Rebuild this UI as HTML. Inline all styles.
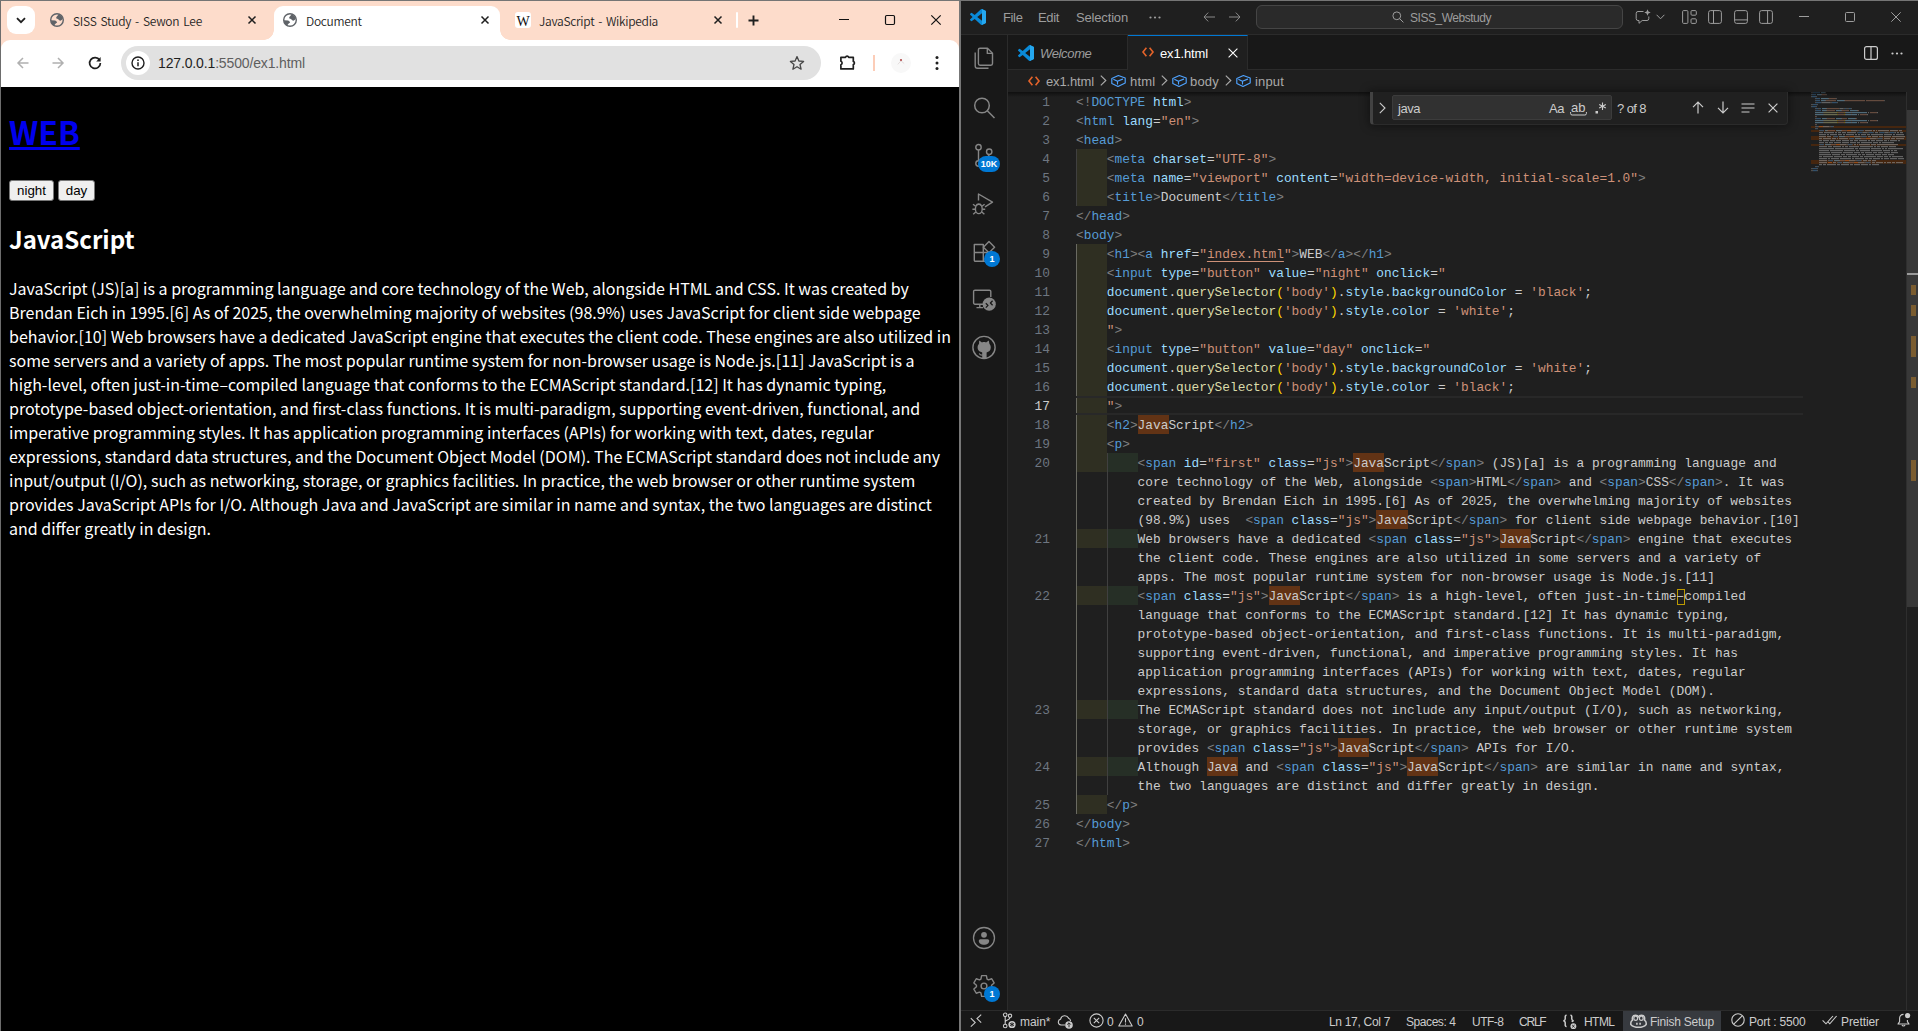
<!DOCTYPE html>
<html lang="en">
<head>
<meta charset="UTF-8">
<title>Document</title>
<style>
*{box-sizing:border-box;margin:0;padding:0}
html,body{width:1918px;height:1031px;overflow:hidden;background:#1f1f1f}
body{position:relative;font-family:"Liberation Sans",sans-serif}
.abs{position:absolute}
svg{display:block;overflow:visible}
/* ---------- Chrome window ---------- */
#chrome{position:absolute;left:0;top:0;width:959px;height:1031px;background:#fddccb;overflow:hidden}
#chrome .bl{position:absolute;left:0;top:0;width:1px;height:1031px;background:#6d6d6d;z-index:9}
#topline{position:absolute;left:0;top:0;width:1918px;height:1px;background:#757575;z-index:20}
#split{position:absolute;left:959px;top:0;width:2px;height:1031px;background:#777;z-index:19}
.ctab{position:absolute;top:11px;height:20px;font-family:"Noto Sans CJK KR","Liberation Sans",sans-serif;font-size:12px;line-height:20px;color:#1f1f1f;white-space:nowrap;font-weight:350;word-spacing:1.5px}
#tsearch{position:absolute;left:7px;top:6px;width:28px;height:28px;border-radius:9px;background:#fff}
#acttab{position:absolute;left:274px;top:6px;width:226px;height:34px;background:#fff;border-radius:9px 9px 0 0}
#acttab:before,#acttab:after{content:"";position:absolute;bottom:0;width:10px;height:10px;background:radial-gradient(circle at 0 0,rgba(255,255,255,0) 9.5px,#fff 10px)}
#acttab:before{left:-10px}
#acttab:after{right:-10px;background:radial-gradient(circle at 100% 0,rgba(255,255,255,0) 9.5px,#fff 10px)}
#toolbar{position:absolute;left:1px;top:40px;width:958px;height:47px;background:#fff;border-radius:9px 9px 0 0}
#omni{position:absolute;left:121px;top:46px;width:700px;height:34px;border-radius:17px;background:#e1e1e1}
#omni .info{position:absolute;left:5px;top:5px;width:24px;height:24px;border-radius:12px;background:#fff}
#url{position:absolute;left:158px;top:53px;font-size:14px;line-height:20px;color:#1f1f1f;white-space:nowrap;font-family:"Liberation Sans",sans-serif}
#url span{color:#5e5e5e}
#page{position:absolute;left:1px;top:87px;width:958px;height:944px;background:#000;color:#fff;font-family:"Noto Sans CJK KR","Liberation Sans",sans-serif}
#page h1{position:absolute;left:8px;top:21px;font-size:32px;line-height:46px;font-weight:bold;color:#0000ee;text-decoration:underline;white-space:nowrap}
#page .btn{position:absolute;top:93px;height:21px;background:#efefef;border:1px solid #767676;border-radius:3px;color:#000;font-family:"Liberation Sans",sans-serif;font-size:13.33px;line-height:18px;padding-top:1px;text-align:center}
#page h2{position:absolute;left:8px;top:134px;font-size:24px;line-height:35px;font-weight:bold;white-space:nowrap}
#page p{position:absolute;left:8px;top:189px;font-size:16px;line-height:24px;white-space:nowrap}
/* ---------- VS Code ---------- */
#vs{position:absolute;left:0;top:0;width:1918px;height:1031px;color:#ccc;font-size:13px;font-family:"Liberation Sans",sans-serif}
#vs .bg{position:absolute;left:961px;top:1px;width:957px;height:1030px;background:#1f1f1f}
#vs .t{position:absolute;white-space:nowrap;line-height:16px;font-size:13px;color:#ccc}
#titlebar{position:absolute;left:961px;top:1px;width:957px;height:34px;background:#1f1f1f;border-bottom:1px solid #2b2b2b}
#actbar{position:absolute;left:961px;top:35px;width:47px;height:975px;background:#181818;border-right:1px solid #2b2b2b}
#tabsbar{position:absolute;left:1008px;top:35px;width:910px;height:35px;background:#181818;border-bottom:1px solid #2b2b2b}
#tab1{position:absolute;left:1008px;top:35px;width:120px;height:35px;background:#181818;border-right:1px solid #2b2b2b;border-bottom:1px solid #2b2b2b}
#tab2{position:absolute;left:1128px;top:35px;width:120px;height:35px;background:#1f1f1f;border-right:1px solid #2b2b2b;border-top:1px solid #0078d4}
#cmdc{position:absolute;left:1256px;top:5px;width:367px;height:24px;border-radius:6px;background:#2a2a2a;border:1px solid #454545}
#statusbar{position:absolute;left:961px;top:1010px;width:957px;height:21px;background:#181818;border-top:1px solid #2b2b2b}
#vs .sb{font-size:12px}
#fin{position:absolute;left:1623px;top:1011px;width:98px;height:20px;background:#373a3f}
.badge{position:absolute;background:#0078d4;color:#fff;font-size:9px;font-weight:bold;text-align:center;border-radius:8px;height:16px;line-height:16px}
/* editor */
.cl{position:absolute;height:19px;line-height:19px;font-family:"Liberation Mono",monospace;font-size:12.83px;white-space:pre;color:#ccc}
.ln{position:absolute;left:1008px;width:42px;height:19px;line-height:19px;text-align:right;font-family:"Liberation Mono",monospace;font-size:12.83px;color:#6e7681}
.lnc{color:#ccc}
.fh{position:absolute;height:19px;background:#623315}
.lk{text-decoration:underline;text-decoration-thickness:1px;text-underline-offset:3px}
.ub{position:absolute;width:8px;height:16px;margin-top:3px;border:1px solid #bd9b03}
.ib1{position:absolute;left:1076px;width:31px;height:19px;background:#2f2f22}
.ib2{position:absolute;left:1107px;width:31px;height:19px;background:#262f26}
.ig{position:absolute;width:1px;background:#404040}
.curline{position:absolute;left:1076px;width:727px;height:19px;border-top:2px solid #282828;border-bottom:2px solid #282828}
#minimap .mr{position:absolute;height:2px;opacity:.62;border-bottom:1px solid rgba(31,31,31,.8)}
#minimap .mh{position:absolute;left:1811px;width:95px;height:2px;background:#45260f}
#find{position:absolute;left:1370px;top:92px;width:418px;height:33px;background:#202020;border:1px solid #2b2b2b;border-left:3px solid #424242;border-top:none;border-radius:0 0 4px 4px;box-shadow:0 0 8px 2px rgba(0,0,0,.36)}
#findin{position:absolute;left:1392px;top:95px;width:220px;height:25px;background:#313131;border:1px solid #3c3c3c;border-radius:2px}
#sbar{position:absolute;left:1906px;top:92px;width:12px;height:918px;border-left:1px solid #2e2e2e}
#sbar .sl{position:absolute;left:0;top:18px;width:12px;height:497px;background:#383838}
#sbar .m{position:absolute;left:4px;width:5px;background:#7a5c30}
.iga{background:#6a6a62}

</style>
</head>
<body>
<div id="topline"></div>
<div id="chrome">
  <div class="bl"></div>
  <div id="tsearch"><svg class="abs" style="left:9px;top:11px" width="10" height="7" viewBox="0 0 10 7"><path d="M1 1.2 L5 5.2 L9 1.2" fill="none" stroke="#1f1f1f" stroke-width="1.8"/></svg></div>
  <div id="acttab"></div>
  <div id="toolbar"></div>
  <!-- tab 1 -->
  <svg class="abs" style="left:50px;top:13px" width="14" height="14" viewBox="0 0 14 14"><circle cx="7" cy="7" r="6.3" fill="#fddccb" stroke="#5f6368" stroke-width="1.4"/><path d="M8.5 1.6 L6.2 4.3 L6.4 5.5 L8 6 L9.2 7.2 L10.4 7.7 L12 6.8 L12.9 5.4 A6.3 6.3 0 0 0 8.5 1.2 Z" fill="#5f6368"/><path d="M1.2 7.2 L5.2 7.4 L6.6 8.5 L7.1 9.5 L5.700 10.500 L4.800 11.400 L4.300 12.900 A6.300 6.300 0 0 1 1 7.200 Z" fill="#5f6368"/></svg>
  <div class="ctab" style="left:73px;letter-spacing:-0.250px">SISS Study - Sewon Lee</div>
  <svg class="abs" style="left:248px;top:16px" width="8" height="8" viewBox="0 0 8 8"><path d="M0.5 0.5 L7.5 7.5 M7.5 0.5 L0.5 7.5" stroke="#1f1f1f" stroke-width="1.5"/></svg>
  <!-- tab 2 active -->
  <svg class="abs" style="left:283px;top:13px" width="14" height="14" viewBox="0 0 14 14"><circle cx="7" cy="7" r="6.3" fill="#fff" stroke="#5f6368" stroke-width="1.4"/><path d="M8.5 1.6 L6.2 4.3 L6.4 5.5 L8 6 L9.2 7.2 L10.4 7.7 L12 6.8 L12.9 5.4 A6.3 6.3 0 0 0 8.5 1.2 Z" fill="#5f6368"/><path d="M1.2 7.2 L5.2 7.4 L6.6 8.5 L7.1 9.5 L5.700 10.500 L4.800 11.400 L4.300 12.900 A6.300 6.300 0 0 1 1 7.200 Z" fill="#5f6368"/></svg>
  <div class="ctab" style="left:306px;letter-spacing:-0.318px">Document</div>
  <svg class="abs" style="left:481px;top:16px" width="8" height="8" viewBox="0 0 8 8"><path d="M0.5 0.5 L7.5 7.5 M7.5 0.5 L0.5 7.5" stroke="#1f1f1f" stroke-width="1.5"/></svg>
  <!-- tab 3 -->
  <div class="abs" style="left:515px;top:12px;width:16px;height:16px;border-radius:3px;background:#fff;font-family:'Liberation Serif',serif;font-size:14px;line-height:19px;text-align:center;color:#111;overflow:hidden">W</div>
  <div class="ctab" style="left:539px;letter-spacing:-0.288px">JavaScript - Wikipedia</div>
  <svg class="abs" style="left:714px;top:16px" width="8" height="8" viewBox="0 0 8 8"><path d="M0.5 0.5 L7.5 7.5 M7.5 0.5 L0.5 7.5" stroke="#1f1f1f" stroke-width="1.5"/></svg>
  <div class="abs" style="left:736px;top:12px;width:2px;height:16px;background:#fff;border-radius:1px"></div>
  <svg class="abs" style="left:748px;top:15px" width="11" height="11" viewBox="0 0 11 11"><path d="M5.500 0.500 V10.500 M0.500 5.500 H10.500" stroke="#1f1f1f" stroke-width="1.900"/></svg>
  <!-- window controls -->
  <div class="abs" style="left:839px;top:19px;width:10px;height:1px;background:#111"></div>
  <svg class="abs" style="left:885px;top:15px" width="10" height="10" viewBox="0 0 10 10"><rect x="0.500" y="0.500" width="9" height="9" rx="1.200" fill="none" stroke="#111" stroke-width="1.200"/></svg>
  <svg class="abs" style="left:931px;top:15px" width="10" height="10" viewBox="0 0 10 10"><path d="M0.300 0.300 L9.700 9.700 M9.700 0.300 L0.300 9.700" stroke="#111" stroke-width="1.200"/></svg>
  <!-- toolbar -->
  <svg class="abs" style="left:17px;top:57px" width="12" height="12" viewBox="0 0 12 12"><path d="M11.5 6 H1 M6 1 L1 6 L6 11" fill="none" stroke="#b0b0b0" stroke-width="1.5"/></svg>
  <svg class="abs" style="left:52px;top:57px" width="12" height="12" viewBox="0 0 12 12"><path d="M0.5 6 H11 M6 1 L11 6 L6 11" fill="none" stroke="#b0b0b0" stroke-width="1.5"/></svg>
  <svg class="abs" style="left:88px;top:56px" width="14" height="14" viewBox="0 0 14 14"><path d="M11.6 4.2 A5.4 5.4 0 1 0 12.4 7" fill="none" stroke="#1f1f1f" stroke-width="1.7"/><path d="M12.6 1 V5.4 H8.2 Z" fill="#1f1f1f"/></svg>
  <div id="omni"><div class="info"></div>
    <svg class="abs" style="left:10px;top:10px" width="14" height="14" viewBox="0 0 14 14"><circle cx="7" cy="7" r="6" fill="none" stroke="#1f1f1f" stroke-width="1.4"/><path d="M7 6.2 V10.2" stroke="#1f1f1f" stroke-width="1.5"/><circle cx="7" cy="4.2" r="0.9" fill="#1f1f1f"/></svg>
    <svg class="abs" style="left:668px;top:9px" width="16" height="16" viewBox="0 0 16 16"><path d="M8 1.6 L9.9 6 L14.6 6.4 L11 9.5 L12.1 14.2 L8 11.7 L3.9 14.2 L5 9.5 L1.4 6.4 L6.1 6 Z" fill="none" stroke="#474747" stroke-width="1.3" stroke-linejoin="round"/></svg>
  </div>
  <div id="url" style="letter-spacing:-0.141px">127.0.0.1<span>:5500/ex1.html</span></div>
  <svg class="abs" style="left:838px;top:52px" width="20" height="20" viewBox="0 0 20 20"><path d="M2.900 5.300 H7.500 A1.700 1.700 0 0 1 10.700 5.300 H15.300 V9.400 A1.700 1.700 0 0 1 15.300 12.600 V16.900 H2.900 V12.700 A1.800 1.800 0 0 0 2.900 9.300 Z" fill="none" stroke="#1f1f1f" stroke-width="1.700" stroke-linejoin="round"/></svg>
  <div class="abs" style="left:873px;top:55px;width:2px;height:16px;background:#fccdb8"></div>
  <div class="abs" style="left:891px;top:53px;width:20px;height:20px;border-radius:10px;background:#f8f8f8"></div>
  <svg class="abs" style="left:897px;top:58px" width="8" height="8" viewBox="0 0 8 8"><path d="M0.800 6.400 L4 2.800 L7.200 5.600" fill="none" stroke="#d8d0d0" stroke-width="0.700"/><circle cx="4" cy="2" r="1.100" fill="#b04a4a"/></svg>
  <svg class="abs" style="left:935px;top:55px" width="4" height="16" viewBox="0 0 4 16"><circle cx="2" cy="2.600" r="1.500" fill="#1f1f1f"/><circle cx="2" cy="8" r="1.500" fill="#1f1f1f"/><circle cx="2" cy="13.400" r="1.500" fill="#1f1f1f"/></svg>
  <!-- page -->
  <div id="page">
    <h1>WEB</h1>
    <div class="btn" style="left:8px;width:45px">night</div>
    <div class="btn" style="left:57px;width:37px">day</div>
    <h2>JavaScript</h2>
    <p>JavaScript (JS)[a] is a programming language and core technology of the Web, alongside HTML and CSS. It was created by<br>Brendan Eich in 1995.[6] As of 2025, the overwhelming majority of websites (98.9%) uses JavaScript for client side webpage<br>behavior.[10] Web browsers have a dedicated JavaScript engine that executes the client code. These engines are also utilized in<br>some servers and a variety of apps. The most popular runtime system for non-browser usage is Node.js.[11] JavaScript is a<br>high-level, often just-in-time–compiled language that conforms to the ECMAScript standard.[12] It has dynamic typing,<br>prototype-based object-orientation, and first-class functions. It is multi-paradigm, supporting event-driven, functional, and<br>imperative programming styles. It has application programming interfaces (APIs) for working with text, dates, regular<br>expressions, standard data structures, and the Document Object Model (DOM). The ECMAScript standard does not include any<br>input/output (I/O), such as networking, storage, or graphics facilities. In practice, the web browser or other runtime system<br>provides JavaScript APIs for I/O. Although Java and JavaScript are similar in name and syntax, the two languages are distinct<br>and differ greatly in design.</p>
  </div>
</div>
<div id="split"></div>
<div id="vs">
<div class="bg"></div>
<div id="titlebar"></div>
<div id="actbar"></div>
<div id="tabsbar"></div>
<div id="tab1"></div>
<div id="tab2"></div>
<!-- title bar -->
<svg class="abs" style="left:970px;top:9px" width="16" height="16" viewBox="0 0 100 100"><path d="M96.46 10.8 75.86.87a6.23 6.23 0 0 0-7.1 1.21L29.35 38.04 12.19 25.01a4.16 4.16 0 0 0-5.32.24l-5.5 5.01a4.17 4.17 0 0 0 0 6.16L16.25 50 1.36 63.58a4.17 4.17 0 0 0 0 6.16l5.5 5.01a4.16 4.16 0 0 0 5.32.24l17.16-13.03 39.41 35.96a6.22 6.22 0 0 0 7.1 1.21l20.6-9.91A6.25 6.25 0 0 0 100 83.59V16.41a6.25 6.25 0 0 0-3.54-5.63ZM75.02 72.7 45.11 50l29.9-22.7Z" fill="#0a8ad8"/><path d="M75 0.5 L96.5 10.8 A6.25 6.25 0 0 1 100 16.4 V83.6 A6.25 6.25 0 0 1 96.5 89.2 L75 99.5 Z" fill="#25a8f0"/></svg>
<div class="t" style="left:1003px;top:10px;color:#9d9d9d;letter-spacing:-0.363px">File</div>
<div class="t" style="left:1038px;top:10px;color:#9d9d9d;letter-spacing:-0.352px">Edit</div>
<div class="t" style="left:1076px;top:10px;color:#9d9d9d;letter-spacing:-0.165px">Selection</div>
<svg class="abs" style="left:1149px;top:16px" width="12" height="3" viewBox="0 0 12 3"><circle cx="1.5" cy="1.5" r="1.1" fill="#9d9d9d"/><circle cx="6" cy="1.5" r="1.1" fill="#9d9d9d"/><circle cx="10.5" cy="1.5" r="1.1" fill="#9d9d9d"/></svg>
<svg class="abs" style="left:1203px;top:12px" width="12" height="10" viewBox="0 0 12 10"><path d="M12 5 H1 M5.2 0.6 L1 5 L5.2 9.4" fill="none" stroke="#8a8a8a" stroke-width="1"/></svg>
<svg class="abs" style="left:1229px;top:12px" width="12" height="10" viewBox="0 0 12 10"><path d="M0 5 H11 M6.8 0.6 L11 5 L6.8 9.4" fill="none" stroke="#8a8a8a" stroke-width="1"/></svg>
<div id="cmdc"></div>
<svg class="abs" style="left:1392px;top:11px" width="12" height="12" viewBox="0 0 12 12"><circle cx="4.8" cy="4.8" r="3.9" fill="none" stroke="#9d9d9d" stroke-width="1"/><path d="M7.6 7.6 L11.4 11.4" stroke="#9d9d9d" stroke-width="1"/></svg>
<div class="t" style="left:1410px;top:10px;font-size:12px;color:#9d9d9d;letter-spacing:-0.475px">SISS_Webstudy</div>
<!-- copilot chat -->
<svg class="abs" style="left:1635px;top:9px" width="17" height="16" viewBox="0 0 17 16"><path d="M8.5 2.5 H3 A1.8 1.8 0 0 0 1.2 4.3 V9.7 A1.8 1.8 0 0 0 3 11.5 H4 V14.3 L7.2 11.5 H12 A1.8 1.8 0 0 0 13.8 9.7 V7.5" fill="none" stroke="#9d9d9d" stroke-width="1" stroke-linejoin="round"/><path d="M12.5 0.3 L13.4 2.6 L15.7 3.5 L13.4 4.4 L12.5 6.7 L11.6 4.4 L9.3 3.5 L11.6 2.6 Z" fill="#9d9d9d"/></svg>
<svg class="abs" style="left:1656px;top:14px" width="9" height="6" viewBox="0 0 9 6"><path d="M0.6 0.8 L4.5 4.8 L8.4 0.8" fill="none" stroke="#9d9d9d" stroke-width="1"/></svg>
<!-- layout icons -->
<svg class="abs" style="left:1682px;top:10px" width="15" height="14" viewBox="0 0 15 14"><rect x="0.6" y="0.6" width="5.3" height="12.8" rx="1" fill="none" stroke="#9d9d9d" stroke-width="1"/><rect x="9" y="0.6" width="5.3" height="4.6" rx="1" fill="none" stroke="#9d9d9d" stroke-width="1"/><rect x="9" y="8.8" width="5.3" height="4.6" rx="1" fill="none" stroke="#9d9d9d" stroke-width="1"/></svg>
<svg class="abs" style="left:1708px;top:10px" width="14" height="14" viewBox="0 0 14 14"><rect x="0.6" y="0.6" width="12.8" height="12.8" rx="2" fill="none" stroke="#9d9d9d" stroke-width="1"/><path d="M5.5 0.6 V13.4" stroke="#9d9d9d" stroke-width="1"/></svg>
<svg class="abs" style="left:1734px;top:10px" width="14" height="14" viewBox="0 0 14 14"><rect x="0.6" y="0.6" width="12.8" height="12.8" rx="2" fill="none" stroke="#9d9d9d" stroke-width="1"/><path d="M0.6 9.9 H13.4" stroke="#9d9d9d" stroke-width="1"/></svg>
<svg class="abs" style="left:1759px;top:10px" width="14" height="14" viewBox="0 0 14 14"><rect x="0.6" y="0.6" width="12.8" height="12.8" rx="2" fill="none" stroke="#9d9d9d" stroke-width="1"/><path d="M8.6 0.6 V13.4" stroke="#9d9d9d" stroke-width="1"/></svg>
<!-- window controls -->
<div class="abs" style="left:1799px;top:16px;width:10px;height:1px;background:#9d9d9d"></div>
<svg class="abs" style="left:1845px;top:12px" width="10" height="10" viewBox="0 0 10 10"><rect x="0.5" y="0.5" width="9" height="9" rx="1" fill="none" stroke="#9d9d9d" stroke-width="1"/></svg>
<svg class="abs" style="left:1891px;top:12px" width="10" height="10" viewBox="0 0 10 10"><path d="M0.3 0.3 L9.7 9.7 M9.7 0.3 L0.3 9.7" stroke="#9d9d9d" stroke-width="1"/></svg>
<!-- activity bar icons -->
<svg class="abs" style="left:972px;top:46px" width="24" height="24" viewBox="0 0 24 24" fill="none" stroke="#868686" stroke-width="1.4" stroke-linejoin="round"><path d="M8 2.2 H15.5 L20.5 7.2 V17.6 A1.6 1.6 0 0 1 18.9 19.2 H8 A1.6 1.6 0 0 1 6.4 17.6 V3.8 A1.6 1.6 0 0 1 8 2.2 Z"/><path d="M15.3 2.4 V7.4 H20.3"/><path d="M3.2 6.5 V20 A2.3 2.3 0 0 0 5.5 22.3 H16.5"/></svg>
<svg class="abs" style="left:972px;top:95px" width="24" height="24" viewBox="0 0 24 24" fill="none" stroke="#868686" stroke-width="1.5"><circle cx="10" cy="10.5" r="7.3"/><path d="M15.3 15.8 L22.5 23"/></svg>
<svg class="abs" style="left:972px;top:143px" width="24" height="24" viewBox="0 0 24 24" fill="none" stroke="#868686" stroke-width="1.4"><circle cx="6.5" cy="4.2" r="2.7"/><circle cx="17.2" cy="8.7" r="2.7"/><circle cx="6.5" cy="20.5" r="2.7"/><path d="M6.5 7 V17.8 M17.2 11.4 C17.2 15 11 14.5 7 17.5"/></svg>
<div class="badge" style="left:978px;top:156px;width:22px">10K</div>
<svg class="abs" style="left:970px;top:191px" width="26" height="26" viewBox="0 0 26 26" fill="none" stroke="#868686" stroke-width="1.4" stroke-linejoin="round"><path d="M8.5 9.5 V3 L22.5 11.2 L15 15.8"/><ellipse cx="8.8" cy="18" rx="3.4" ry="4.6"/><path d="M5.6 15.2 L3 13.2 M12 15.2 L14.6 13.2 M5.3 18.2 H2.4 M12.3 18.2 H15.2 M5.8 21 L3.2 23.2 M11.8 21 L14.4 23.2 M6.4 14.4 C6.8 12.6 10.8 12.6 11.2 14.4"/></svg>
<svg class="abs" style="left:972px;top:240px" width="24" height="24" viewBox="0 0 24 24" fill="none" stroke="#868686" stroke-width="1.4" stroke-linejoin="round"><path d="M2.3 4.5 H11.3 V21.3 H3.3 A1 1 0 0 1 2.3 20.3 Z M2.3 12.5 H20.3 V20.3 A1 1 0 0 1 19.3 21.3 H11.3"/><path d="M17 1.6 L22.6 7.2 L17 12.8 L11.4 7.2 Z"/></svg>
<div class="badge" style="left:984px;top:251px;width:16px">1</div>
<svg class="abs" style="left:972px;top:288px" width="26" height="24" viewBox="0 0 26 24" fill="none" stroke="#868686" stroke-width="1.4" stroke-linejoin="round"><path d="M13 16.2 H3 A1.4 1.4 0 0 1 1.6 14.8 V3.6 A1.4 1.4 0 0 1 3 2.2 H17.4 A1.4 1.4 0 0 1 18.8 3.6 V9"/><path d="M4.5 19.6 H11 M7.8 16.4 V19.4"/><circle cx="17.2" cy="16.2" r="6.6" fill="#868686" stroke="none"/><path d="M13.8 15.2 L16 17.400 L13.8 19.600 M20.600 12.800 L18.400 15 L20.600 17.200" stroke="#181818" stroke-width="1.3"/></svg>
<svg class="abs" style="left:972px;top:335px" width="24" height="25" viewBox="0 0 24 25"><circle cx="12" cy="12.5" r="11.1" fill="none" stroke="#868686" stroke-width="1.4"/><path d="M7.2 5.6 L10 7.4 C11.3 7 12.7 7 14 7.4 L16.8 5.6 L17.4 8.8 C18.4 10 18.8 11.2 18.8 12.6 C18.8 15.6 16.8 17 14.6 17.4 V23.4 H10.2 V20.6 C8.6 21 7.6 20.2 6.8 18.6 L7.6 18.2 C8.400 19.400 9.200 19.800 10.200 19.400 V17.400 C8 17 5.600 15.600 5.600 12.600 C5.600 11.200 6 10 7 8.800 Z" fill="#868686"/></svg>
<svg class="abs" style="left:972px;top:926px" width="24" height="24" viewBox="0 0 24 24"><circle cx="12" cy="12" r="10.5" fill="none" stroke="#868686" stroke-width="1.3"/><circle cx="12" cy="8.8" r="2.9" fill="#868686"/><path d="M6.800 14.800 A1.500 1.500 0 0 1 8.300 13.300 H15.700 A1.500 1.500 0 0 1 17.200 14.800 C17.200 17.400 14.800 18.800 12 18.800 C9.200 18.800 6.800 17.400 6.800 14.800 Z" fill="#868686"/></svg>
<svg class="abs" style="left:972px;top:974px" width="24" height="24" viewBox="0 0 24 24" fill="none" stroke="#868686" stroke-width="1.4" stroke-linejoin="round"><circle cx="12" cy="12" r="2.9"/><path d="M15.09 5.06 L14.38 1.67 L9.62 1.67 L8.91 5.06 L7.53 5.85 L4.25 4.77 L1.86 8.90 L4.44 11.21 L4.44 12.79 L1.86 15.10 L4.25 19.23 L7.53 18.15 L8.91 18.94 L9.62 22.33 L14.38 22.33 L15.09 18.94 L16.47 18.15 L19.75 19.23 L22.14 15.10 L19.56 12.79 L19.56 11.21 L22.14 8.90 L19.75 4.77 L16.47 5.85 Z"/></svg>
<div class="badge" style="left:984px;top:986px;width:16px">1</div>
<!-- tabs -->
<svg class="abs" style="left:1018px;top:45px" width="16" height="16" viewBox="0 0 100 100"><path d="M96.46 10.8 75.86.87a6.23 6.23 0 0 0-7.1 1.21L29.35 38.04 12.19 25.01a4.16 4.16 0 0 0-5.32.24l-5.5 5.01a4.17 4.17 0 0 0 0 6.16L16.25 50 1.36 63.58a4.17 4.17 0 0 0 0 6.16l5.5 5.01a4.16 4.16 0 0 0 5.32.24l17.16-13.03 39.41 35.96a6.22 6.22 0 0 0 7.1 1.21l20.6-9.91A6.25 6.25 0 0 0 100 83.59V16.41a6.25 6.25 0 0 0-3.54-5.63ZM75.02 72.700 45.110 50l29.900-22.700Z" fill="#0a8ad8"/><path d="M75 0.5 L96.5 10.8 A6.25 6.25 0 0 1 100 16.4 V83.6 A6.25 6.25 0 0 1 96.5 89.2 L75 99.5 Z" fill="#25a8f0"/></svg>
<div class="t" style="left:1040px;top:46px;font-style:italic;color:#9d9d9d;letter-spacing:-0.350px">Welcome</div>
<svg class="abs" style="left:1142px;top:47px" width="12" height="10" viewBox="0 0 12 10"><path d="M4.400 0.800 L1 5 L4.400 9.200 M7.600 0.800 L11 5 L7.600 9.200" fill="none" stroke="#e4632a" stroke-width="1.6"/></svg>
<div class="t" style="left:1160px;top:46px;color:#fff;letter-spacing:-0.143px">ex1.html</div>
<svg class="abs" style="left:1228px;top:48px" width="10" height="10" viewBox="0 0 10 10"><path d="M0.6 0.6 L9.4 9.4 M9.4 0.6 L0.6 9.4" stroke="#fff" stroke-width="1.1"/></svg>
<svg class="abs" style="left:1864px;top:46px" width="14" height="14" viewBox="0 0 14 14"><rect x="0.6" y="0.6" width="12.8" height="12.8" rx="2" fill="none" stroke="#ccc" stroke-width="1.2"/><path d="M7 0.6 V13.4" stroke="#ccc" stroke-width="1.2"/></svg>
<svg class="abs" style="left:1891px;top:52px" width="12" height="3" viewBox="0 0 12 3"><circle cx="1.5" cy="1.5" r="1.1" fill="#ccc"/><circle cx="6" cy="1.5" r="1.1" fill="#ccc"/><circle cx="10.5" cy="1.5" r="1.1" fill="#ccc"/></svg>
<!-- breadcrumbs -->
<svg class="abs" style="left:1028px;top:76px" width="12" height="10" viewBox="0 0 12 10"><path d="M4.400 0.800 L1 5 L4.400 9.200 M7.600 0.800 L11 5 L7.600 9.200" fill="none" stroke="#e4632a" stroke-width="1.6"/></svg>
<div class="t" style="left:1046px;top:74px;color:#a9a9a9;letter-spacing:-0.143px">ex1.html</div>
<svg class="abs bcc" style="left:1100px;top:75px" width="7" height="11" viewBox="0 0 7 11"><path d="M0.800 0.600 L5.800 5.500 L0.800 10.400" fill="none" stroke="#a9a9a9" stroke-width="1.150"/></svg>
<svg class="abs" style="left:1111px;top:75px" width="15" height="12" viewBox="0 0 15 12" fill="none" stroke="#4fa3ff" stroke-width="1.15" stroke-linejoin="round" stroke-linecap="round"><path d="M7.4 0.5 L14.2 3 V8 L7 11.500 L0.800 8.500 V3.500 Z"/><path d="M2.800 4.400 L6.500 6.200 L11.600 4.100 M6.500 6.200 V8.900"/></svg>
<div class="t" style="left:1130px;top:74px;color:#a9a9a9;letter-spacing:0.234px">html</div>
<svg class="abs bcc" style="left:1161px;top:75px" width="7" height="11" viewBox="0 0 7 11"><path d="M0.800 0.600 L5.800 5.500 L0.800 10.400" fill="none" stroke="#a9a9a9" stroke-width="1.150"/></svg>
<svg class="abs" style="left:1172px;top:75px" width="15" height="12" viewBox="0 0 15 12" fill="none" stroke="#4fa3ff" stroke-width="1.15" stroke-linejoin="round" stroke-linecap="round"><path d="M7.4 0.5 L14.2 3 V8 L7 11.500 L0.800 8.500 V3.500 Z"/><path d="M2.800 4.400 L6.500 6.200 L11.600 4.100 M6.500 6.200 V8.900"/></svg>
<div class="t" style="left:1190px;top:74px;color:#a9a9a9;letter-spacing:0.199px">body</div>
<svg class="abs bcc" style="left:1225px;top:75px" width="7" height="11" viewBox="0 0 7 11"><path d="M0.800 0.600 L5.800 5.500 L0.800 10.400" fill="none" stroke="#a9a9a9" stroke-width="1.150"/></svg>
<svg class="abs" style="left:1236px;top:75px" width="15" height="12" viewBox="0 0 15 12" fill="none" stroke="#4fa3ff" stroke-width="1.15" stroke-linejoin="round" stroke-linecap="round"><path d="M7.4 0.5 L14.2 3 V8 L7 11.500 L0.800 8.500 V3.500 Z"/><path d="M2.800 4.400 L6.500 6.200 L11.600 4.100 M6.500 6.200 V8.900"/></svg>
<div class="t" style="left:1255px;top:74px;color:#a9a9a9;letter-spacing:0.159px">input</div>
<!-- editor -->
<div class="ib1" style="top:149px"></div>
<div class="ib1" style="top:168px"></div>
<div class="ib1" style="top:187px"></div>
<div class="ib1" style="top:244px"></div>
<div class="ib1" style="top:263px"></div>
<div class="ib1" style="top:282px"></div>
<div class="ib1" style="top:301px"></div>
<div class="ib1" style="top:320px"></div>
<div class="ib1" style="top:339px"></div>
<div class="ib1" style="top:358px"></div>
<div class="ib1" style="top:377px"></div>
<div class="ib1" style="top:396px"></div>
<div class="ib1" style="top:415px"></div>
<div class="ib1" style="top:434px"></div>
<div class="ib1" style="top:453px"></div>
<div class="ib2" style="top:453px"></div>
<div class="ib1" style="top:529px"></div>
<div class="ib2" style="top:529px"></div>
<div class="ib1" style="top:586px"></div>
<div class="ib2" style="top:586px"></div>
<div class="ib1" style="top:700px"></div>
<div class="ib2" style="top:700px"></div>
<div class="ib1" style="top:757px"></div>
<div class="ib2" style="top:757px"></div>
<div class="ib1" style="top:795px"></div>
<div class="ig" style="left:1076px;top:149px;height:57px"></div>
<div class="ig iga" style="left:1076px;top:244px;height:570px"></div>
<div class="ig" style="left:1106.8px;top:453px;height:342px"></div>
<div class="curline" style="top:396px"></div>
<div class="ln" style="top:93px">1</div>
<div class="cl" style="left:1076.0px;top:93px"><span style="color:#808080">&lt;!</span><span style="color:#569cd6">DOCTYPE</span><span style="color:#cccccc"> </span><span style="color:#9cdcfe">html</span><span style="color:#808080">&gt;</span></div>
<div class="ln" style="top:112px">2</div>
<div class="cl" style="left:1076.0px;top:112px"><span style="color:#808080">&lt;</span><span style="color:#569cd6">html</span><span style="color:#cccccc"> </span><span style="color:#9cdcfe">lang</span><span style="color:#cccccc">=</span><span style="color:#ce9178">"en"</span><span style="color:#808080">&gt;</span></div>
<div class="ln" style="top:131px">3</div>
<div class="cl" style="left:1076.0px;top:131px"><span style="color:#808080">&lt;</span><span style="color:#569cd6">head</span><span style="color:#808080">&gt;</span></div>
<div class="ln" style="top:150px">4</div>
<div class="cl" style="left:1106.8px;top:150px"><span style="color:#808080">&lt;</span><span style="color:#569cd6">meta</span><span style="color:#cccccc"> </span><span style="color:#9cdcfe">charset</span><span style="color:#cccccc">=</span><span style="color:#ce9178">"UTF-8"</span><span style="color:#808080">&gt;</span></div>
<div class="ln" style="top:169px">5</div>
<div class="cl" style="left:1106.8px;top:169px"><span style="color:#808080">&lt;</span><span style="color:#569cd6">meta</span><span style="color:#cccccc"> </span><span style="color:#9cdcfe">name</span><span style="color:#cccccc">=</span><span style="color:#ce9178">"viewport"</span><span style="color:#cccccc"> </span><span style="color:#9cdcfe">content</span><span style="color:#cccccc">=</span><span style="color:#ce9178">"width=device-width, initial-scale=1.0"</span><span style="color:#808080">&gt;</span></div>
<div class="ln" style="top:188px">6</div>
<div class="cl" style="left:1106.8px;top:188px"><span style="color:#808080">&lt;</span><span style="color:#569cd6">title</span><span style="color:#808080">&gt;</span><span style="color:#cccccc">Document</span><span style="color:#808080">&lt;/</span><span style="color:#569cd6">title</span><span style="color:#808080">&gt;</span></div>
<div class="ln" style="top:207px">7</div>
<div class="cl" style="left:1076.0px;top:207px"><span style="color:#808080">&lt;/</span><span style="color:#569cd6">head</span><span style="color:#808080">&gt;</span></div>
<div class="ln" style="top:226px">8</div>
<div class="cl" style="left:1076.0px;top:226px"><span style="color:#808080">&lt;</span><span style="color:#569cd6">body</span><span style="color:#808080">&gt;</span></div>
<div class="ln" style="top:245px">9</div>
<div class="cl" style="left:1106.8px;top:245px"><span style="color:#808080">&lt;</span><span style="color:#569cd6">h1</span><span style="color:#808080">&gt;</span><span style="color:#808080">&lt;</span><span style="color:#569cd6">a</span><span style="color:#cccccc"> </span><span style="color:#9cdcfe">href</span><span style="color:#cccccc">=</span><span style="color:#ce9178">"</span><span class="lk" style="color:#ce9178">index.html</span><span style="color:#ce9178">"</span><span style="color:#808080">&gt;</span><span style="color:#cccccc">WEB</span><span style="color:#808080">&lt;/</span><span style="color:#569cd6">a</span><span style="color:#808080">&gt;</span><span style="color:#808080">&lt;/</span><span style="color:#569cd6">h1</span><span style="color:#808080">&gt;</span></div>
<div class="ln" style="top:264px">10</div>
<div class="cl" style="left:1106.8px;top:264px"><span style="color:#808080">&lt;</span><span style="color:#569cd6">input</span><span style="color:#cccccc"> </span><span style="color:#9cdcfe">type</span><span style="color:#cccccc">=</span><span style="color:#ce9178">"button"</span><span style="color:#cccccc"> </span><span style="color:#9cdcfe">value</span><span style="color:#cccccc">=</span><span style="color:#ce9178">"night"</span><span style="color:#cccccc"> </span><span style="color:#9cdcfe">onclick</span><span style="color:#cccccc">=</span><span style="color:#ce9178">"</span></div>
<div class="ln" style="top:283px">11</div>
<div class="cl" style="left:1106.8px;top:283px"><span style="color:#9cdcfe">document</span><span style="color:#cccccc">.</span><span style="color:#dcdcaa">querySelector</span><span style="color:#ffd700">(</span><span style="color:#ce9178">'body'</span><span style="color:#ffd700">)</span><span style="color:#cccccc">.</span><span style="color:#9cdcfe">style</span><span style="color:#cccccc">.</span><span style="color:#9cdcfe">backgroundColor</span><span style="color:#cccccc"> = </span><span style="color:#ce9178">'black'</span><span style="color:#cccccc">;</span></div>
<div class="ln" style="top:302px">12</div>
<div class="cl" style="left:1106.8px;top:302px"><span style="color:#9cdcfe">document</span><span style="color:#cccccc">.</span><span style="color:#dcdcaa">querySelector</span><span style="color:#ffd700">(</span><span style="color:#ce9178">'body'</span><span style="color:#ffd700">)</span><span style="color:#cccccc">.</span><span style="color:#9cdcfe">style</span><span style="color:#cccccc">.</span><span style="color:#9cdcfe">color</span><span style="color:#cccccc"> = </span><span style="color:#ce9178">'white'</span><span style="color:#cccccc">;</span></div>
<div class="ln" style="top:321px">13</div>
<div class="cl" style="left:1106.8px;top:321px"><span style="color:#ce9178">"</span><span style="color:#808080">&gt;</span></div>
<div class="ln" style="top:340px">14</div>
<div class="cl" style="left:1106.8px;top:340px"><span style="color:#808080">&lt;</span><span style="color:#569cd6">input</span><span style="color:#cccccc"> </span><span style="color:#9cdcfe">type</span><span style="color:#cccccc">=</span><span style="color:#ce9178">"button"</span><span style="color:#cccccc"> </span><span style="color:#9cdcfe">value</span><span style="color:#cccccc">=</span><span style="color:#ce9178">"day"</span><span style="color:#cccccc"> </span><span style="color:#9cdcfe">onclick</span><span style="color:#cccccc">=</span><span style="color:#ce9178">"</span></div>
<div class="ln" style="top:359px">15</div>
<div class="cl" style="left:1106.8px;top:359px"><span style="color:#9cdcfe">document</span><span style="color:#cccccc">.</span><span style="color:#dcdcaa">querySelector</span><span style="color:#ffd700">(</span><span style="color:#ce9178">'body'</span><span style="color:#ffd700">)</span><span style="color:#cccccc">.</span><span style="color:#9cdcfe">style</span><span style="color:#cccccc">.</span><span style="color:#9cdcfe">backgroundColor</span><span style="color:#cccccc"> = </span><span style="color:#ce9178">'white'</span><span style="color:#cccccc">;</span></div>
<div class="ln" style="top:378px">16</div>
<div class="cl" style="left:1106.8px;top:378px"><span style="color:#9cdcfe">document</span><span style="color:#cccccc">.</span><span style="color:#dcdcaa">querySelector</span><span style="color:#ffd700">(</span><span style="color:#ce9178">'body'</span><span style="color:#ffd700">)</span><span style="color:#cccccc">.</span><span style="color:#9cdcfe">style</span><span style="color:#cccccc">.</span><span style="color:#9cdcfe">color</span><span style="color:#cccccc"> = </span><span style="color:#ce9178">'black'</span><span style="color:#cccccc">;</span></div>
<div class="ln lnc" style="top:397px">17</div>
<div class="cl" style="left:1106.8px;top:397px"><span style="color:#ce9178">"</span><span style="color:#808080">&gt;</span></div>
<div class="ln" style="top:416px">18</div>
<div class="fh" style="left:1138px;top:415px;width:31px"></div>
<div class="cl" style="left:1106.8px;top:416px"><span style="color:#808080">&lt;</span><span style="color:#569cd6">h2</span><span style="color:#808080">&gt;</span><span style="color:#cccccc">Java</span><span style="color:#cccccc">Script</span><span style="color:#808080">&lt;/</span><span style="color:#569cd6">h2</span><span style="color:#808080">&gt;</span></div>
<div class="ln" style="top:435px">19</div>
<div class="cl" style="left:1106.8px;top:435px"><span style="color:#808080">&lt;</span><span style="color:#569cd6">p</span><span style="color:#808080">&gt;</span></div>
<div class="ln" style="top:454px">20</div>
<div class="fh" style="left:1353px;top:453px;width:31px"></div>
<div class="cl" style="left:1137.6px;top:454px"><span style="color:#808080">&lt;</span><span style="color:#569cd6">span</span><span style="color:#cccccc"> </span><span style="color:#9cdcfe">id</span><span style="color:#cccccc">=</span><span style="color:#ce9178">"first"</span><span style="color:#cccccc"> </span><span style="color:#9cdcfe">class</span><span style="color:#cccccc">=</span><span style="color:#ce9178">"js"</span><span style="color:#808080">&gt;</span><span style="color:#cccccc">Java</span><span style="color:#cccccc">Script</span><span style="color:#808080">&lt;/</span><span style="color:#569cd6">span</span><span style="color:#808080">&gt;</span><span style="color:#cccccc"> (JS)[a] is a programming language and</span></div>
<div class="cl" style="left:1137.6px;top:473px"><span style="color:#cccccc">core technology of the Web, alongside </span><span style="color:#808080">&lt;</span><span style="color:#569cd6">span</span><span style="color:#808080">&gt;</span><span style="color:#cccccc">HTML</span><span style="color:#808080">&lt;/</span><span style="color:#569cd6">span</span><span style="color:#808080">&gt;</span><span style="color:#cccccc"> and </span><span style="color:#808080">&lt;</span><span style="color:#569cd6">span</span><span style="color:#808080">&gt;</span><span style="color:#cccccc">CSS</span><span style="color:#808080">&lt;/</span><span style="color:#569cd6">span</span><span style="color:#808080">&gt;</span><span style="color:#cccccc">. It was</span></div>
<div class="cl" style="left:1137.6px;top:492px"><span style="color:#cccccc">created by Brendan Eich in 1995.[6] As of 2025, the overwhelming majority of websites</span></div>
<div class="fh" style="left:1376px;top:510px;width:32px"></div>
<div class="cl" style="left:1137.6px;top:511px"><span style="color:#cccccc">(98.9%) uses  </span><span style="color:#808080">&lt;</span><span style="color:#569cd6">span</span><span style="color:#cccccc"> </span><span style="color:#9cdcfe">class</span><span style="color:#cccccc">=</span><span style="color:#ce9178">"js"</span><span style="color:#808080">&gt;</span><span style="color:#cccccc">Java</span><span style="color:#cccccc">Script</span><span style="color:#808080">&lt;/</span><span style="color:#569cd6">span</span><span style="color:#808080">&gt;</span><span style="color:#cccccc"> for client side webpage behavior.[10]</span></div>
<div class="ln" style="top:530px">21</div>
<div class="fh" style="left:1500px;top:529px;width:31px"></div>
<div class="cl" style="left:1137.6px;top:530px"><span style="color:#cccccc">Web browsers have a dedicated </span><span style="color:#808080">&lt;</span><span style="color:#569cd6">span</span><span style="color:#cccccc"> </span><span style="color:#9cdcfe">class</span><span style="color:#cccccc">=</span><span style="color:#ce9178">"js"</span><span style="color:#808080">&gt;</span><span style="color:#cccccc">Java</span><span style="color:#cccccc">Script</span><span style="color:#808080">&lt;/</span><span style="color:#569cd6">span</span><span style="color:#808080">&gt;</span><span style="color:#cccccc"> engine that executes</span></div>
<div class="cl" style="left:1137.6px;top:549px"><span style="color:#cccccc">the client code. These engines are also utilized in some servers and a variety of</span></div>
<div class="cl" style="left:1137.6px;top:568px"><span style="color:#cccccc">apps. The most popular runtime system for non-browser usage is Node.js.[11]</span></div>
<div class="ln" style="top:587px">22</div>
<div class="fh" style="left:1269px;top:586px;width:31px"></div>
<div class="ub" style="left:1676.6px;top:586px"></div>
<div class="cl" style="left:1137.6px;top:587px"><span style="color:#808080">&lt;</span><span style="color:#569cd6">span</span><span style="color:#cccccc"> </span><span style="color:#9cdcfe">class</span><span style="color:#cccccc">=</span><span style="color:#ce9178">"js"</span><span style="color:#808080">&gt;</span><span style="color:#cccccc">Java</span><span style="color:#cccccc">Script</span><span style="color:#808080">&lt;/</span><span style="color:#569cd6">span</span><span style="color:#808080">&gt;</span><span style="color:#cccccc"> is a high-level, often just-in-time</span><span style="color:#cccccc">–</span><span style="color:#cccccc">compiled</span></div>
<div class="cl" style="left:1137.6px;top:606px"><span style="color:#cccccc">language that conforms to the ECMAScript standard.[12] It has dynamic typing,</span></div>
<div class="cl" style="left:1137.6px;top:625px"><span style="color:#cccccc">prototype-based object-orientation, and first-class functions. It is multi-paradigm,</span></div>
<div class="cl" style="left:1137.6px;top:644px"><span style="color:#cccccc">supporting event-driven, functional, and imperative programming styles. It has</span></div>
<div class="cl" style="left:1137.6px;top:663px"><span style="color:#cccccc">application programming interfaces (APIs) for working with text, dates, regular</span></div>
<div class="cl" style="left:1137.6px;top:682px"><span style="color:#cccccc">expressions, standard data structures, and the Document Object Model (DOM).</span></div>
<div class="ln" style="top:701px">23</div>
<div class="cl" style="left:1137.6px;top:701px"><span style="color:#cccccc">The ECMAScript standard does not include any input/output (I/O), such as networking,</span></div>
<div class="cl" style="left:1137.6px;top:720px"><span style="color:#cccccc">storage, or graphics facilities. In practice, the web browser or other runtime system</span></div>
<div class="fh" style="left:1338px;top:738px;width:31px"></div>
<div class="cl" style="left:1137.6px;top:739px"><span style="color:#cccccc">provides </span><span style="color:#808080">&lt;</span><span style="color:#569cd6">span</span><span style="color:#cccccc"> </span><span style="color:#9cdcfe">class</span><span style="color:#cccccc">=</span><span style="color:#ce9178">"js"</span><span style="color:#808080">&gt;</span><span style="color:#cccccc">Java</span><span style="color:#cccccc">Script</span><span style="color:#808080">&lt;/</span><span style="color:#569cd6">span</span><span style="color:#808080">&gt;</span><span style="color:#cccccc"> APIs for I/O.</span></div>
<div class="ln" style="top:758px">24</div>
<div class="fh" style="left:1207px;top:757px;width:31px"></div>
<div class="fh" style="left:1407px;top:757px;width:31px"></div>
<div class="cl" style="left:1137.6px;top:758px"><span style="color:#cccccc">Although </span><span style="color:#cccccc">Java</span><span style="color:#cccccc"> and </span><span style="color:#808080">&lt;</span><span style="color:#569cd6">span</span><span style="color:#cccccc"> </span><span style="color:#9cdcfe">class</span><span style="color:#cccccc">=</span><span style="color:#ce9178">"js"</span><span style="color:#808080">&gt;</span><span style="color:#cccccc">Java</span><span style="color:#cccccc">Script</span><span style="color:#808080">&lt;/</span><span style="color:#569cd6">span</span><span style="color:#808080">&gt;</span><span style="color:#cccccc"> are similar in name and syntax,</span></div>
<div class="cl" style="left:1137.6px;top:777px"><span style="color:#cccccc">the two languages are distinct and differ greatly in design.</span></div>
<div class="ln" style="top:796px">25</div>
<div class="cl" style="left:1106.8px;top:796px"><span style="color:#808080">&lt;/</span><span style="color:#569cd6">p</span><span style="color:#808080">&gt;</span></div>
<div class="ln" style="top:815px">26</div>
<div class="cl" style="left:1076.0px;top:815px"><span style="color:#808080">&lt;/</span><span style="color:#569cd6">body</span><span style="color:#808080">&gt;</span></div>
<div class="ln" style="top:834px">27</div>
<div class="cl" style="left:1076.0px;top:834px"><span style="color:#808080">&lt;/</span><span style="color:#569cd6">html</span><span style="color:#808080">&gt;</span></div>
<div id="minimap"><div class="mr" style="left:1811px;top:92px;width:2px;background:#6a6a6a"></div><div class="mr" style="left:1813px;top:92px;width:7px;background:#3f6f99"></div><div class="mr" style="left:1821px;top:92px;width:4px;background:#6d98b0"></div><div class="mr" style="left:1825px;top:92px;width:1px;background:#6a6a6a"></div><div class="mr" style="left:1811px;top:94px;width:1px;background:#6a6a6a"></div><div class="mr" style="left:1812px;top:94px;width:4px;background:#3f6f99"></div><div class="mr" style="left:1817px;top:94px;width:4px;background:#6d98b0"></div><div class="mr" style="left:1821px;top:94px;width:1px;background:#8c8c8c"></div><div class="mr" style="left:1822px;top:94px;width:4px;background:#8f6652"></div><div class="mr" style="left:1826px;top:94px;width:1px;background:#6a6a6a"></div><div class="mr" style="left:1811px;top:96px;width:1px;background:#6a6a6a"></div><div class="mr" style="left:1812px;top:96px;width:4px;background:#3f6f99"></div><div class="mr" style="left:1816px;top:96px;width:1px;background:#6a6a6a"></div><div class="mr" style="left:1815px;top:98px;width:1px;background:#6a6a6a"></div><div class="mr" style="left:1816px;top:98px;width:4px;background:#3f6f99"></div><div class="mr" style="left:1821px;top:98px;width:7px;background:#6d98b0"></div><div class="mr" style="left:1828px;top:98px;width:1px;background:#8c8c8c"></div><div class="mr" style="left:1829px;top:98px;width:7px;background:#8f6652"></div><div class="mr" style="left:1836px;top:98px;width:1px;background:#6a6a6a"></div><div class="mr" style="left:1815px;top:100px;width:1px;background:#6a6a6a"></div><div class="mr" style="left:1816px;top:100px;width:4px;background:#3f6f99"></div><div class="mr" style="left:1821px;top:100px;width:4px;background:#6d98b0"></div><div class="mr" style="left:1825px;top:100px;width:1px;background:#8c8c8c"></div><div class="mr" style="left:1826px;top:100px;width:10px;background:#8f6652"></div><div class="mr" style="left:1837px;top:100px;width:7px;background:#6d98b0"></div><div class="mr" style="left:1844px;top:100px;width:1px;background:#8c8c8c"></div><div class="mr" style="left:1845px;top:100px;width:20px;background:#8f6652"></div><div class="mr" style="left:1866px;top:100px;width:18px;background:#8f6652"></div><div class="mr" style="left:1884px;top:100px;width:1px;background:#6a6a6a"></div><div class="mr" style="left:1815px;top:102px;width:1px;background:#6a6a6a"></div><div class="mr" style="left:1816px;top:102px;width:5px;background:#3f6f99"></div><div class="mr" style="left:1821px;top:102px;width:1px;background:#6a6a6a"></div><div class="mr" style="left:1822px;top:102px;width:8px;background:#8c8c8c"></div><div class="mr" style="left:1830px;top:102px;width:2px;background:#6a6a6a"></div><div class="mr" style="left:1832px;top:102px;width:5px;background:#3f6f99"></div><div class="mr" style="left:1837px;top:102px;width:1px;background:#6a6a6a"></div><div class="mr" style="left:1811px;top:104px;width:2px;background:#6a6a6a"></div><div class="mr" style="left:1813px;top:104px;width:4px;background:#3f6f99"></div><div class="mr" style="left:1817px;top:104px;width:1px;background:#6a6a6a"></div><div class="mr" style="left:1811px;top:106px;width:1px;background:#6a6a6a"></div><div class="mr" style="left:1812px;top:106px;width:4px;background:#3f6f99"></div><div class="mr" style="left:1816px;top:106px;width:1px;background:#6a6a6a"></div><div class="mr" style="left:1815px;top:108px;width:1px;background:#6a6a6a"></div><div class="mr" style="left:1816px;top:108px;width:2px;background:#3f6f99"></div><div class="mr" style="left:1818px;top:108px;width:1px;background:#6a6a6a"></div><div class="mr" style="left:1819px;top:108px;width:1px;background:#6a6a6a"></div><div class="mr" style="left:1820px;top:108px;width:1px;background:#3f6f99"></div><div class="mr" style="left:1822px;top:108px;width:4px;background:#6d98b0"></div><div class="mr" style="left:1826px;top:108px;width:1px;background:#8c8c8c"></div><div class="mr" style="left:1827px;top:108px;width:1px;background:#8f6652"></div><div class="mr" style="left:1828px;top:108px;width:10px;background:#8f6652"></div><div class="mr" style="left:1838px;top:108px;width:1px;background:#8f6652"></div><div class="mr" style="left:1839px;top:108px;width:1px;background:#6a6a6a"></div><div class="mr" style="left:1840px;top:108px;width:3px;background:#8c8c8c"></div><div class="mr" style="left:1843px;top:108px;width:2px;background:#6a6a6a"></div><div class="mr" style="left:1845px;top:108px;width:1px;background:#3f6f99"></div><div class="mr" style="left:1846px;top:108px;width:1px;background:#6a6a6a"></div><div class="mr" style="left:1847px;top:108px;width:2px;background:#6a6a6a"></div><div class="mr" style="left:1849px;top:108px;width:2px;background:#3f6f99"></div><div class="mr" style="left:1851px;top:108px;width:1px;background:#6a6a6a"></div><div class="mr" style="left:1815px;top:110px;width:1px;background:#6a6a6a"></div><div class="mr" style="left:1816px;top:110px;width:5px;background:#3f6f99"></div><div class="mr" style="left:1822px;top:110px;width:4px;background:#6d98b0"></div><div class="mr" style="left:1826px;top:110px;width:1px;background:#8c8c8c"></div><div class="mr" style="left:1827px;top:110px;width:8px;background:#8f6652"></div><div class="mr" style="left:1836px;top:110px;width:5px;background:#6d98b0"></div><div class="mr" style="left:1841px;top:110px;width:1px;background:#8c8c8c"></div><div class="mr" style="left:1842px;top:110px;width:7px;background:#8f6652"></div><div class="mr" style="left:1850px;top:110px;width:7px;background:#6d98b0"></div><div class="mr" style="left:1857px;top:110px;width:1px;background:#8c8c8c"></div><div class="mr" style="left:1858px;top:110px;width:1px;background:#8f6652"></div><div class="mr" style="left:1815px;top:112px;width:8px;background:#6d98b0"></div><div class="mr" style="left:1823px;top:112px;width:1px;background:#8c8c8c"></div><div class="mr" style="left:1824px;top:112px;width:13px;background:#97976f"></div><div class="mr" style="left:1837px;top:112px;width:1px;background:#a08a1a"></div><div class="mr" style="left:1838px;top:112px;width:6px;background:#8f6652"></div><div class="mr" style="left:1844px;top:112px;width:1px;background:#a08a1a"></div><div class="mr" style="left:1845px;top:112px;width:1px;background:#8c8c8c"></div><div class="mr" style="left:1846px;top:112px;width:5px;background:#6d98b0"></div><div class="mr" style="left:1851px;top:112px;width:1px;background:#8c8c8c"></div><div class="mr" style="left:1852px;top:112px;width:15px;background:#6d98b0"></div><div class="mr" style="left:1868px;top:112px;width:1px;background:#8c8c8c"></div><div class="mr" style="left:1870px;top:112px;width:7px;background:#8f6652"></div><div class="mr" style="left:1877px;top:112px;width:1px;background:#8c8c8c"></div><div class="mr" style="left:1815px;top:114px;width:8px;background:#6d98b0"></div><div class="mr" style="left:1823px;top:114px;width:1px;background:#8c8c8c"></div><div class="mr" style="left:1824px;top:114px;width:13px;background:#97976f"></div><div class="mr" style="left:1837px;top:114px;width:1px;background:#a08a1a"></div><div class="mr" style="left:1838px;top:114px;width:6px;background:#8f6652"></div><div class="mr" style="left:1844px;top:114px;width:1px;background:#a08a1a"></div><div class="mr" style="left:1845px;top:114px;width:1px;background:#8c8c8c"></div><div class="mr" style="left:1846px;top:114px;width:5px;background:#6d98b0"></div><div class="mr" style="left:1851px;top:114px;width:1px;background:#8c8c8c"></div><div class="mr" style="left:1852px;top:114px;width:5px;background:#6d98b0"></div><div class="mr" style="left:1858px;top:114px;width:1px;background:#8c8c8c"></div><div class="mr" style="left:1860px;top:114px;width:7px;background:#8f6652"></div><div class="mr" style="left:1867px;top:114px;width:1px;background:#8c8c8c"></div><div class="mr" style="left:1815px;top:116px;width:1px;background:#8f6652"></div><div class="mr" style="left:1816px;top:116px;width:1px;background:#6a6a6a"></div><div class="mr" style="left:1815px;top:118px;width:1px;background:#6a6a6a"></div><div class="mr" style="left:1816px;top:118px;width:5px;background:#3f6f99"></div><div class="mr" style="left:1822px;top:118px;width:4px;background:#6d98b0"></div><div class="mr" style="left:1826px;top:118px;width:1px;background:#8c8c8c"></div><div class="mr" style="left:1827px;top:118px;width:8px;background:#8f6652"></div><div class="mr" style="left:1836px;top:118px;width:5px;background:#6d98b0"></div><div class="mr" style="left:1841px;top:118px;width:1px;background:#8c8c8c"></div><div class="mr" style="left:1842px;top:118px;width:5px;background:#8f6652"></div><div class="mr" style="left:1848px;top:118px;width:7px;background:#6d98b0"></div><div class="mr" style="left:1855px;top:118px;width:1px;background:#8c8c8c"></div><div class="mr" style="left:1856px;top:118px;width:1px;background:#8f6652"></div><div class="mr" style="left:1815px;top:120px;width:8px;background:#6d98b0"></div><div class="mr" style="left:1823px;top:120px;width:1px;background:#8c8c8c"></div><div class="mr" style="left:1824px;top:120px;width:13px;background:#97976f"></div><div class="mr" style="left:1837px;top:120px;width:1px;background:#a08a1a"></div><div class="mr" style="left:1838px;top:120px;width:6px;background:#8f6652"></div><div class="mr" style="left:1844px;top:120px;width:1px;background:#a08a1a"></div><div class="mr" style="left:1845px;top:120px;width:1px;background:#8c8c8c"></div><div class="mr" style="left:1846px;top:120px;width:5px;background:#6d98b0"></div><div class="mr" style="left:1851px;top:120px;width:1px;background:#8c8c8c"></div><div class="mr" style="left:1852px;top:120px;width:15px;background:#6d98b0"></div><div class="mr" style="left:1868px;top:120px;width:1px;background:#8c8c8c"></div><div class="mr" style="left:1870px;top:120px;width:7px;background:#8f6652"></div><div class="mr" style="left:1877px;top:120px;width:1px;background:#8c8c8c"></div><div class="mr" style="left:1815px;top:122px;width:8px;background:#6d98b0"></div><div class="mr" style="left:1823px;top:122px;width:1px;background:#8c8c8c"></div><div class="mr" style="left:1824px;top:122px;width:13px;background:#97976f"></div><div class="mr" style="left:1837px;top:122px;width:1px;background:#a08a1a"></div><div class="mr" style="left:1838px;top:122px;width:6px;background:#8f6652"></div><div class="mr" style="left:1844px;top:122px;width:1px;background:#a08a1a"></div><div class="mr" style="left:1845px;top:122px;width:1px;background:#8c8c8c"></div><div class="mr" style="left:1846px;top:122px;width:5px;background:#6d98b0"></div><div class="mr" style="left:1851px;top:122px;width:1px;background:#8c8c8c"></div><div class="mr" style="left:1852px;top:122px;width:5px;background:#6d98b0"></div><div class="mr" style="left:1858px;top:122px;width:1px;background:#8c8c8c"></div><div class="mr" style="left:1860px;top:122px;width:7px;background:#8f6652"></div><div class="mr" style="left:1867px;top:122px;width:1px;background:#8c8c8c"></div><div class="mr" style="left:1815px;top:124px;width:1px;background:#8f6652"></div><div class="mr" style="left:1816px;top:124px;width:1px;background:#6a6a6a"></div><div class="mh" style="top:126px"></div><div class="mr" style="left:1815px;top:126px;width:1px;background:#6a6a6a"></div><div class="mr" style="left:1816px;top:126px;width:2px;background:#3f6f99"></div><div class="mr" style="left:1818px;top:126px;width:1px;background:#6a6a6a"></div><div class="mr" style="left:1819px;top:126px;width:4px;background:#c8641e"></div><div class="mr" style="left:1823px;top:126px;width:6px;background:#8c8c8c"></div><div class="mr" style="left:1829px;top:126px;width:2px;background:#6a6a6a"></div><div class="mr" style="left:1831px;top:126px;width:2px;background:#3f6f99"></div><div class="mr" style="left:1833px;top:126px;width:1px;background:#6a6a6a"></div><div class="mr" style="left:1815px;top:128px;width:1px;background:#6a6a6a"></div><div class="mr" style="left:1816px;top:128px;width:1px;background:#3f6f99"></div><div class="mr" style="left:1817px;top:128px;width:1px;background:#6a6a6a"></div><div class="mh" style="top:130px"></div><div class="mr" style="left:1819px;top:130px;width:1px;background:#6a6a6a"></div><div class="mr" style="left:1820px;top:130px;width:4px;background:#3f6f99"></div><div class="mr" style="left:1825px;top:130px;width:2px;background:#6d98b0"></div><div class="mr" style="left:1827px;top:130px;width:1px;background:#8c8c8c"></div><div class="mr" style="left:1828px;top:130px;width:7px;background:#8f6652"></div><div class="mr" style="left:1836px;top:130px;width:5px;background:#6d98b0"></div><div class="mr" style="left:1841px;top:130px;width:1px;background:#8c8c8c"></div><div class="mr" style="left:1842px;top:130px;width:4px;background:#8f6652"></div><div class="mr" style="left:1846px;top:130px;width:1px;background:#6a6a6a"></div><div class="mr" style="left:1847px;top:130px;width:4px;background:#c8641e"></div><div class="mr" style="left:1851px;top:130px;width:6px;background:#8c8c8c"></div><div class="mr" style="left:1857px;top:130px;width:2px;background:#6a6a6a"></div><div class="mr" style="left:1859px;top:130px;width:4px;background:#3f6f99"></div><div class="mr" style="left:1863px;top:130px;width:1px;background:#6a6a6a"></div><div class="mr" style="left:1865px;top:130px;width:7px;background:#8c8c8c"></div><div class="mr" style="left:1873px;top:130px;width:2px;background:#8c8c8c"></div><div class="mr" style="left:1876px;top:130px;width:1px;background:#8c8c8c"></div><div class="mr" style="left:1878px;top:130px;width:11px;background:#8c8c8c"></div><div class="mr" style="left:1890px;top:130px;width:8px;background:#8c8c8c"></div><div class="mr" style="left:1899px;top:130px;width:3px;background:#8c8c8c"></div><div class="mr" style="left:1819px;top:132px;width:4px;background:#8c8c8c"></div><div class="mr" style="left:1824px;top:132px;width:10px;background:#8c8c8c"></div><div class="mr" style="left:1835px;top:132px;width:2px;background:#8c8c8c"></div><div class="mr" style="left:1838px;top:132px;width:3px;background:#8c8c8c"></div><div class="mr" style="left:1842px;top:132px;width:4px;background:#8c8c8c"></div><div class="mr" style="left:1847px;top:132px;width:9px;background:#8c8c8c"></div><div class="mr" style="left:1857px;top:132px;width:1px;background:#6a6a6a"></div><div class="mr" style="left:1858px;top:132px;width:4px;background:#3f6f99"></div><div class="mr" style="left:1862px;top:132px;width:1px;background:#6a6a6a"></div><div class="mr" style="left:1863px;top:132px;width:4px;background:#8c8c8c"></div><div class="mr" style="left:1867px;top:132px;width:2px;background:#6a6a6a"></div><div class="mr" style="left:1869px;top:132px;width:4px;background:#3f6f99"></div><div class="mr" style="left:1873px;top:132px;width:1px;background:#6a6a6a"></div><div class="mr" style="left:1875px;top:132px;width:3px;background:#8c8c8c"></div><div class="mr" style="left:1879px;top:132px;width:1px;background:#6a6a6a"></div><div class="mr" style="left:1880px;top:132px;width:4px;background:#3f6f99"></div><div class="mr" style="left:1884px;top:132px;width:1px;background:#6a6a6a"></div><div class="mr" style="left:1885px;top:132px;width:3px;background:#8c8c8c"></div><div class="mr" style="left:1888px;top:132px;width:2px;background:#6a6a6a"></div><div class="mr" style="left:1890px;top:132px;width:4px;background:#3f6f99"></div><div class="mr" style="left:1894px;top:132px;width:1px;background:#6a6a6a"></div><div class="mr" style="left:1895px;top:132px;width:1px;background:#8c8c8c"></div><div class="mr" style="left:1897px;top:132px;width:2px;background:#8c8c8c"></div><div class="mr" style="left:1900px;top:132px;width:3px;background:#8c8c8c"></div><div class="mr" style="left:1819px;top:134px;width:7px;background:#8c8c8c"></div><div class="mr" style="left:1827px;top:134px;width:2px;background:#8c8c8c"></div><div class="mr" style="left:1830px;top:134px;width:7px;background:#8c8c8c"></div><div class="mr" style="left:1838px;top:134px;width:4px;background:#8c8c8c"></div><div class="mr" style="left:1843px;top:134px;width:2px;background:#8c8c8c"></div><div class="mr" style="left:1846px;top:134px;width:8px;background:#8c8c8c"></div><div class="mr" style="left:1855px;top:134px;width:2px;background:#8c8c8c"></div><div class="mr" style="left:1858px;top:134px;width:2px;background:#8c8c8c"></div><div class="mr" style="left:1861px;top:134px;width:5px;background:#8c8c8c"></div><div class="mr" style="left:1867px;top:134px;width:3px;background:#8c8c8c"></div><div class="mr" style="left:1871px;top:134px;width:12px;background:#8c8c8c"></div><div class="mr" style="left:1884px;top:134px;width:8px;background:#8c8c8c"></div><div class="mr" style="left:1893px;top:134px;width:2px;background:#8c8c8c"></div><div class="mr" style="left:1896px;top:134px;width:8px;background:#8c8c8c"></div><div class="mh" style="top:136px"></div><div class="mr" style="left:1819px;top:136px;width:7px;background:#8c8c8c"></div><div class="mr" style="left:1827px;top:136px;width:4px;background:#8c8c8c"></div><div class="mr" style="left:1833px;top:136px;width:1px;background:#6a6a6a"></div><div class="mr" style="left:1834px;top:136px;width:4px;background:#3f6f99"></div><div class="mr" style="left:1839px;top:136px;width:5px;background:#6d98b0"></div><div class="mr" style="left:1844px;top:136px;width:1px;background:#8c8c8c"></div><div class="mr" style="left:1845px;top:136px;width:4px;background:#8f6652"></div><div class="mr" style="left:1849px;top:136px;width:1px;background:#6a6a6a"></div><div class="mr" style="left:1850px;top:136px;width:4px;background:#c8641e"></div><div class="mr" style="left:1854px;top:136px;width:6px;background:#8c8c8c"></div><div class="mr" style="left:1860px;top:136px;width:2px;background:#6a6a6a"></div><div class="mr" style="left:1862px;top:136px;width:4px;background:#3f6f99"></div><div class="mr" style="left:1866px;top:136px;width:1px;background:#6a6a6a"></div><div class="mr" style="left:1868px;top:136px;width:3px;background:#8c8c8c"></div><div class="mr" style="left:1872px;top:136px;width:6px;background:#8c8c8c"></div><div class="mr" style="left:1879px;top:136px;width:4px;background:#8c8c8c"></div><div class="mr" style="left:1884px;top:136px;width:7px;background:#8c8c8c"></div><div class="mr" style="left:1892px;top:136px;width:13px;background:#8c8c8c"></div><div class="mh" style="top:138px"></div><div class="mr" style="left:1819px;top:138px;width:3px;background:#8c8c8c"></div><div class="mr" style="left:1823px;top:138px;width:8px;background:#8c8c8c"></div><div class="mr" style="left:1832px;top:138px;width:4px;background:#8c8c8c"></div><div class="mr" style="left:1837px;top:138px;width:1px;background:#8c8c8c"></div><div class="mr" style="left:1839px;top:138px;width:9px;background:#8c8c8c"></div><div class="mr" style="left:1849px;top:138px;width:1px;background:#6a6a6a"></div><div class="mr" style="left:1850px;top:138px;width:4px;background:#3f6f99"></div><div class="mr" style="left:1855px;top:138px;width:5px;background:#6d98b0"></div><div class="mr" style="left:1860px;top:138px;width:1px;background:#8c8c8c"></div><div class="mr" style="left:1861px;top:138px;width:4px;background:#8f6652"></div><div class="mr" style="left:1865px;top:138px;width:1px;background:#6a6a6a"></div><div class="mr" style="left:1866px;top:138px;width:4px;background:#c8641e"></div><div class="mr" style="left:1870px;top:138px;width:6px;background:#8c8c8c"></div><div class="mr" style="left:1876px;top:138px;width:2px;background:#6a6a6a"></div><div class="mr" style="left:1878px;top:138px;width:4px;background:#3f6f99"></div><div class="mr" style="left:1882px;top:138px;width:1px;background:#6a6a6a"></div><div class="mr" style="left:1884px;top:138px;width:6px;background:#8c8c8c"></div><div class="mr" style="left:1891px;top:138px;width:4px;background:#8c8c8c"></div><div class="mr" style="left:1896px;top:138px;width:8px;background:#8c8c8c"></div><div class="mr" style="left:1819px;top:140px;width:3px;background:#8c8c8c"></div><div class="mr" style="left:1823px;top:140px;width:6px;background:#8c8c8c"></div><div class="mr" style="left:1830px;top:140px;width:5px;background:#8c8c8c"></div><div class="mr" style="left:1836px;top:140px;width:5px;background:#8c8c8c"></div><div class="mr" style="left:1842px;top:140px;width:7px;background:#8c8c8c"></div><div class="mr" style="left:1850px;top:140px;width:3px;background:#8c8c8c"></div><div class="mr" style="left:1854px;top:140px;width:4px;background:#8c8c8c"></div><div class="mr" style="left:1859px;top:140px;width:8px;background:#8c8c8c"></div><div class="mr" style="left:1868px;top:140px;width:2px;background:#8c8c8c"></div><div class="mr" style="left:1871px;top:140px;width:4px;background:#8c8c8c"></div><div class="mr" style="left:1876px;top:140px;width:7px;background:#8c8c8c"></div><div class="mr" style="left:1884px;top:140px;width:3px;background:#8c8c8c"></div><div class="mr" style="left:1888px;top:140px;width:1px;background:#8c8c8c"></div><div class="mr" style="left:1890px;top:140px;width:7px;background:#8c8c8c"></div><div class="mr" style="left:1898px;top:140px;width:2px;background:#8c8c8c"></div><div class="mr" style="left:1819px;top:142px;width:5px;background:#8c8c8c"></div><div class="mr" style="left:1825px;top:142px;width:3px;background:#8c8c8c"></div><div class="mr" style="left:1829px;top:142px;width:4px;background:#8c8c8c"></div><div class="mr" style="left:1834px;top:142px;width:7px;background:#8c8c8c"></div><div class="mr" style="left:1842px;top:142px;width:7px;background:#8c8c8c"></div><div class="mr" style="left:1850px;top:142px;width:6px;background:#8c8c8c"></div><div class="mr" style="left:1857px;top:142px;width:3px;background:#8c8c8c"></div><div class="mr" style="left:1861px;top:142px;width:11px;background:#8c8c8c"></div><div class="mr" style="left:1873px;top:142px;width:5px;background:#8c8c8c"></div><div class="mr" style="left:1879px;top:142px;width:2px;background:#8c8c8c"></div><div class="mr" style="left:1882px;top:142px;width:12px;background:#8c8c8c"></div><div class="mh" style="top:144px"></div><div class="mr" style="left:1819px;top:144px;width:1px;background:#6a6a6a"></div><div class="mr" style="left:1820px;top:144px;width:4px;background:#3f6f99"></div><div class="mr" style="left:1825px;top:144px;width:5px;background:#6d98b0"></div><div class="mr" style="left:1830px;top:144px;width:1px;background:#8c8c8c"></div><div class="mr" style="left:1831px;top:144px;width:4px;background:#8f6652"></div><div class="mr" style="left:1835px;top:144px;width:1px;background:#6a6a6a"></div><div class="mr" style="left:1836px;top:144px;width:4px;background:#c8641e"></div><div class="mr" style="left:1840px;top:144px;width:6px;background:#8c8c8c"></div><div class="mr" style="left:1846px;top:144px;width:2px;background:#6a6a6a"></div><div class="mr" style="left:1848px;top:144px;width:4px;background:#3f6f99"></div><div class="mr" style="left:1852px;top:144px;width:1px;background:#6a6a6a"></div><div class="mr" style="left:1854px;top:144px;width:2px;background:#8c8c8c"></div><div class="mr" style="left:1857px;top:144px;width:1px;background:#8c8c8c"></div><div class="mr" style="left:1859px;top:144px;width:11px;background:#8c8c8c"></div><div class="mr" style="left:1871px;top:144px;width:5px;background:#8c8c8c"></div><div class="mr" style="left:1877px;top:144px;width:12px;background:#8c8c8c"></div><div class="mr" style="left:1889px;top:144px;width:1px;background:#8c8c8c"></div><div class="mr" style="left:1890px;top:144px;width:8px;background:#8c8c8c"></div><div class="mr" style="left:1819px;top:146px;width:8px;background:#8c8c8c"></div><div class="mr" style="left:1828px;top:146px;width:4px;background:#8c8c8c"></div><div class="mr" style="left:1833px;top:146px;width:8px;background:#8c8c8c"></div><div class="mr" style="left:1842px;top:146px;width:2px;background:#8c8c8c"></div><div class="mr" style="left:1845px;top:146px;width:3px;background:#8c8c8c"></div><div class="mr" style="left:1849px;top:146px;width:10px;background:#8c8c8c"></div><div class="mr" style="left:1860px;top:146px;width:13px;background:#8c8c8c"></div><div class="mr" style="left:1874px;top:146px;width:2px;background:#8c8c8c"></div><div class="mr" style="left:1877px;top:146px;width:3px;background:#8c8c8c"></div><div class="mr" style="left:1881px;top:146px;width:7px;background:#8c8c8c"></div><div class="mr" style="left:1889px;top:146px;width:7px;background:#8c8c8c"></div><div class="mr" style="left:1819px;top:148px;width:15px;background:#8c8c8c"></div><div class="mr" style="left:1835px;top:148px;width:19px;background:#8c8c8c"></div><div class="mr" style="left:1855px;top:148px;width:3px;background:#8c8c8c"></div><div class="mr" style="left:1859px;top:148px;width:11px;background:#8c8c8c"></div><div class="mr" style="left:1871px;top:148px;width:10px;background:#8c8c8c"></div><div class="mr" style="left:1882px;top:148px;width:2px;background:#8c8c8c"></div><div class="mr" style="left:1885px;top:148px;width:2px;background:#8c8c8c"></div><div class="mr" style="left:1888px;top:148px;width:15px;background:#8c8c8c"></div><div class="mr" style="left:1819px;top:150px;width:10px;background:#8c8c8c"></div><div class="mr" style="left:1830px;top:150px;width:13px;background:#8c8c8c"></div><div class="mr" style="left:1844px;top:150px;width:11px;background:#8c8c8c"></div><div class="mr" style="left:1856px;top:150px;width:3px;background:#8c8c8c"></div><div class="mr" style="left:1860px;top:150px;width:10px;background:#8c8c8c"></div><div class="mr" style="left:1871px;top:150px;width:11px;background:#8c8c8c"></div><div class="mr" style="left:1883px;top:150px;width:7px;background:#8c8c8c"></div><div class="mr" style="left:1891px;top:150px;width:2px;background:#8c8c8c"></div><div class="mr" style="left:1894px;top:150px;width:3px;background:#8c8c8c"></div><div class="mr" style="left:1819px;top:152px;width:11px;background:#8c8c8c"></div><div class="mr" style="left:1831px;top:152px;width:11px;background:#8c8c8c"></div><div class="mr" style="left:1843px;top:152px;width:10px;background:#8c8c8c"></div><div class="mr" style="left:1854px;top:152px;width:6px;background:#8c8c8c"></div><div class="mr" style="left:1861px;top:152px;width:3px;background:#8c8c8c"></div><div class="mr" style="left:1865px;top:152px;width:7px;background:#8c8c8c"></div><div class="mr" style="left:1873px;top:152px;width:4px;background:#8c8c8c"></div><div class="mr" style="left:1878px;top:152px;width:5px;background:#8c8c8c"></div><div class="mr" style="left:1884px;top:152px;width:6px;background:#8c8c8c"></div><div class="mr" style="left:1891px;top:152px;width:7px;background:#8c8c8c"></div><div class="mr" style="left:1819px;top:154px;width:12px;background:#8c8c8c"></div><div class="mr" style="left:1832px;top:154px;width:8px;background:#8c8c8c"></div><div class="mr" style="left:1841px;top:154px;width:4px;background:#8c8c8c"></div><div class="mr" style="left:1846px;top:154px;width:11px;background:#8c8c8c"></div><div class="mr" style="left:1858px;top:154px;width:3px;background:#8c8c8c"></div><div class="mr" style="left:1862px;top:154px;width:3px;background:#8c8c8c"></div><div class="mr" style="left:1866px;top:154px;width:8px;background:#8c8c8c"></div><div class="mr" style="left:1875px;top:154px;width:6px;background:#8c8c8c"></div><div class="mr" style="left:1882px;top:154px;width:5px;background:#8c8c8c"></div><div class="mr" style="left:1888px;top:154px;width:6px;background:#8c8c8c"></div><div class="mr" style="left:1819px;top:156px;width:3px;background:#8c8c8c"></div><div class="mr" style="left:1823px;top:156px;width:10px;background:#8c8c8c"></div><div class="mr" style="left:1834px;top:156px;width:8px;background:#8c8c8c"></div><div class="mr" style="left:1843px;top:156px;width:4px;background:#8c8c8c"></div><div class="mr" style="left:1848px;top:156px;width:3px;background:#8c8c8c"></div><div class="mr" style="left:1852px;top:156px;width:7px;background:#8c8c8c"></div><div class="mr" style="left:1860px;top:156px;width:3px;background:#8c8c8c"></div><div class="mr" style="left:1864px;top:156px;width:12px;background:#8c8c8c"></div><div class="mr" style="left:1877px;top:156px;width:6px;background:#8c8c8c"></div><div class="mr" style="left:1884px;top:156px;width:4px;background:#8c8c8c"></div><div class="mr" style="left:1889px;top:156px;width:2px;background:#8c8c8c"></div><div class="mr" style="left:1892px;top:156px;width:11px;background:#8c8c8c"></div><div class="mr" style="left:1819px;top:158px;width:8px;background:#8c8c8c"></div><div class="mr" style="left:1828px;top:158px;width:2px;background:#8c8c8c"></div><div class="mr" style="left:1831px;top:158px;width:8px;background:#8c8c8c"></div><div class="mr" style="left:1840px;top:158px;width:11px;background:#8c8c8c"></div><div class="mr" style="left:1852px;top:158px;width:2px;background:#8c8c8c"></div><div class="mr" style="left:1855px;top:158px;width:9px;background:#8c8c8c"></div><div class="mr" style="left:1865px;top:158px;width:3px;background:#8c8c8c"></div><div class="mr" style="left:1869px;top:158px;width:3px;background:#8c8c8c"></div><div class="mr" style="left:1873px;top:158px;width:7px;background:#8c8c8c"></div><div class="mr" style="left:1881px;top:158px;width:2px;background:#8c8c8c"></div><div class="mr" style="left:1884px;top:158px;width:5px;background:#8c8c8c"></div><div class="mr" style="left:1890px;top:158px;width:7px;background:#8c8c8c"></div><div class="mr" style="left:1898px;top:158px;width:6px;background:#8c8c8c"></div><div class="mh" style="top:160px"></div><div class="mr" style="left:1819px;top:160px;width:8px;background:#8c8c8c"></div><div class="mr" style="left:1828px;top:160px;width:1px;background:#6a6a6a"></div><div class="mr" style="left:1829px;top:160px;width:4px;background:#3f6f99"></div><div class="mr" style="left:1834px;top:160px;width:5px;background:#6d98b0"></div><div class="mr" style="left:1839px;top:160px;width:1px;background:#8c8c8c"></div><div class="mr" style="left:1840px;top:160px;width:4px;background:#8f6652"></div><div class="mr" style="left:1844px;top:160px;width:1px;background:#6a6a6a"></div><div class="mr" style="left:1845px;top:160px;width:4px;background:#c8641e"></div><div class="mr" style="left:1849px;top:160px;width:6px;background:#8c8c8c"></div><div class="mr" style="left:1855px;top:160px;width:2px;background:#6a6a6a"></div><div class="mr" style="left:1857px;top:160px;width:4px;background:#3f6f99"></div><div class="mr" style="left:1861px;top:160px;width:1px;background:#6a6a6a"></div><div class="mr" style="left:1863px;top:160px;width:4px;background:#8c8c8c"></div><div class="mr" style="left:1868px;top:160px;width:3px;background:#8c8c8c"></div><div class="mr" style="left:1872px;top:160px;width:4px;background:#8c8c8c"></div><div class="mh" style="top:162px"></div><div class="mr" style="left:1819px;top:162px;width:8px;background:#8c8c8c"></div><div class="mr" style="left:1828px;top:162px;width:4px;background:#c8641e"></div><div class="mr" style="left:1833px;top:162px;width:3px;background:#8c8c8c"></div><div class="mr" style="left:1837px;top:162px;width:1px;background:#6a6a6a"></div><div class="mr" style="left:1838px;top:162px;width:4px;background:#3f6f99"></div><div class="mr" style="left:1843px;top:162px;width:5px;background:#6d98b0"></div><div class="mr" style="left:1848px;top:162px;width:1px;background:#8c8c8c"></div><div class="mr" style="left:1849px;top:162px;width:4px;background:#8f6652"></div><div class="mr" style="left:1853px;top:162px;width:1px;background:#6a6a6a"></div><div class="mr" style="left:1854px;top:162px;width:4px;background:#c8641e"></div><div class="mr" style="left:1858px;top:162px;width:6px;background:#8c8c8c"></div><div class="mr" style="left:1864px;top:162px;width:2px;background:#6a6a6a"></div><div class="mr" style="left:1866px;top:162px;width:4px;background:#3f6f99"></div><div class="mr" style="left:1870px;top:162px;width:1px;background:#6a6a6a"></div><div class="mr" style="left:1872px;top:162px;width:3px;background:#8c8c8c"></div><div class="mr" style="left:1876px;top:162px;width:7px;background:#8c8c8c"></div><div class="mr" style="left:1884px;top:162px;width:2px;background:#8c8c8c"></div><div class="mr" style="left:1887px;top:162px;width:4px;background:#8c8c8c"></div><div class="mr" style="left:1892px;top:162px;width:3px;background:#8c8c8c"></div><div class="mr" style="left:1896px;top:162px;width:7px;background:#8c8c8c"></div><div class="mr" style="left:1819px;top:164px;width:3px;background:#8c8c8c"></div><div class="mr" style="left:1823px;top:164px;width:3px;background:#8c8c8c"></div><div class="mr" style="left:1827px;top:164px;width:9px;background:#8c8c8c"></div><div class="mr" style="left:1837px;top:164px;width:3px;background:#8c8c8c"></div><div class="mr" style="left:1841px;top:164px;width:8px;background:#8c8c8c"></div><div class="mr" style="left:1850px;top:164px;width:3px;background:#8c8c8c"></div><div class="mr" style="left:1854px;top:164px;width:6px;background:#8c8c8c"></div><div class="mr" style="left:1861px;top:164px;width:7px;background:#8c8c8c"></div><div class="mr" style="left:1869px;top:164px;width:2px;background:#8c8c8c"></div><div class="mr" style="left:1872px;top:164px;width:7px;background:#8c8c8c"></div><div class="mr" style="left:1815px;top:166px;width:2px;background:#6a6a6a"></div><div class="mr" style="left:1817px;top:166px;width:1px;background:#3f6f99"></div><div class="mr" style="left:1818px;top:166px;width:1px;background:#6a6a6a"></div><div class="mr" style="left:1811px;top:168px;width:2px;background:#6a6a6a"></div><div class="mr" style="left:1813px;top:168px;width:4px;background:#3f6f99"></div><div class="mr" style="left:1817px;top:168px;width:1px;background:#6a6a6a"></div><div class="mr" style="left:1811px;top:170px;width:2px;background:#6a6a6a"></div><div class="mr" style="left:1813px;top:170px;width:4px;background:#3f6f99"></div><div class="mr" style="left:1817px;top:170px;width:1px;background:#6a6a6a"></div></div>
<div class="abs" style="left:1008px;top:92px;width:898px;height:5px;background:linear-gradient(rgba(0,0,0,.5),rgba(0,0,0,0))"></div>
<!-- scrollbar -->
<div id="sbar"><div class="sl"></div>
<div class="abs" style="left:0;top:181px;width:12px;height:2px;background:#9a9a9a"></div>
<div class="m" style="top:193px;height:10px"></div>
<div class="m" style="top:213px;height:11px"></div>
<div class="m" style="top:244px;height:21px"></div>
<div class="m" style="top:285px;height:11px"></div>
<div class="m" style="top:368px;height:21px"></div>
</div>
<!-- find widget -->
<div id="find"></div>
<div id="findin"></div>
<svg class="abs" style="left:1379px;top:102px" width="7" height="12" viewBox="0 0 7 12"><path d="M0.8 0.8 L6 6 L0.8 11.2" fill="none" stroke="#ccc" stroke-width="1.1"/></svg>
<div class="t" style="left:1398px;top:101px;letter-spacing:-0.465px">java</div>
<div class="t" style="left:1549px;top:101px;letter-spacing:-0.3px">Aa</div>
<div class="t" style="left:1571px;top:100px;text-decoration:none">ab</div>
<svg class="abs" style="left:1570px;top:112px" width="17" height="4" viewBox="0 0 17 4"><path d="M0.6 0 V1.5 A1.5 1.5 0 0 0 2.1 3 H14.9 A1.5 1.5 0 0 0 16.4 1.5 V0" fill="none" stroke="#ccc" stroke-width="1"/></svg>
<svg class="abs" style="left:1595px;top:102px" width="12" height="12" viewBox="0 0 12 12"><rect x="0.5" y="9" width="2.5" height="2.5" fill="#ccc"/><path d="M7.5 0.500 V8 M4.200 2.400 L10.800 6.100 M10.800 2.400 L4.200 6.100" stroke="#ccc" stroke-width="1.100"/></svg>
<div class="t" style="left:1617px;top:101px;letter-spacing:-0.589px">? of 8</div>
<svg class="abs" style="left:1692px;top:101px" width="12" height="13" viewBox="0 0 12 13"><path d="M6 12.500 V1.200 M1 6.200 L6 1.200 L11 6.200" fill="none" stroke="#ccc" stroke-width="1.200"/></svg>
<svg class="abs" style="left:1717px;top:101px" width="12" height="13" viewBox="0 0 12 13"><path d="M6 0.500 V11.800 M1 6.800 L6 11.800 L11 6.800" fill="none" stroke="#ccc" stroke-width="1.200"/></svg>
<svg class="abs" style="left:1741px;top:103px" width="14" height="10" viewBox="0 0 14 10"><path d="M0.500 1 H13.500 M0.500 5 H13.500 M0.500 9 H8.500" stroke="#ccc" stroke-width="1.100"/></svg>
<svg class="abs" style="left:1768px;top:103px" width="10" height="10" viewBox="0 0 10 10"><path d="M0.600 0.600 L9.400 9.400 M9.400 0.600 L0.600 9.400" stroke="#ccc" stroke-width="1.200"/></svg>
<!-- status bar -->
<div id="statusbar"></div>
<div id="fin"></div>
<svg class="abs" style="left:970px;top:1014px" width="12" height="13" viewBox="0 0 12 13"><path d="M0.800 4.200 L5.200 8.600 L0.800 12.600 M11.200 0.600 L7 4.600 L11.200 8.600" fill="none" stroke="#ccc" stroke-width="1.100"/></svg>
<svg class="abs" style="left:1002px;top:1012px" width="14" height="17" viewBox="0 0 14 17" fill="none" stroke="#ccc" stroke-width="1.1"><circle cx="3.200" cy="2.800" r="1.800"/><circle cx="3.200" cy="14" r="1.800"/><path d="M3.200 4.600 V12.200 M3.200 10 C3.200 7.500 8 8.500 8 5.500"/><circle cx="8" cy="3.800" r="1.700"/><circle cx="10" cy="12.500" r="3.600" fill="#ccc" stroke="none"/><path d="M10 10.300 V14.700 M8 11.400 L12 13.600 M12 11.400 L8 13.600" stroke="#181818" stroke-width="0.900"/></svg>
<div class="t sb" style="left:1020px;top:1014px;letter-spacing:-0.037px">main*</div>
<svg class="abs" style="left:1057px;top:1015px" width="17" height="14" viewBox="0 0 17 14"><path d="M8 10 H4 A3 3 0 0 1 3.600 4.100 A4.200 4.200 0 0 1 11.600 3.300 A3.200 3.200 0 0 1 13.600 6" fill="none" stroke="#ccc" stroke-width="1.100"/><circle cx="12" cy="10" r="3.800" fill="#ccc"/><path d="M12 12.300 V7.900 M10.200 9.600 L12 7.800 L13.800 9.600" fill="none" stroke="#181818" stroke-width="0.900"/></svg>
<svg class="abs" style="left:1089px;top:1013px" width="15" height="15" viewBox="0 0 15 15" fill="none" stroke="#ccc" stroke-width="1.100"><circle cx="7.500" cy="7.500" r="6.600"/><path d="M4.800 4.800 L10.200 10.200 M10.200 4.800 L4.800 10.200"/></svg>
<div class="t sb" style="left:1107px;top:1014px">0</div>
<svg class="abs" style="left:1118px;top:1013px" width="15" height="14" viewBox="0 0 15 14" fill="none" stroke="#ccc" stroke-width="1.100" stroke-linejoin="round"><path d="M7.500 1 L14.200 13 H0.800 Z"/><path d="M7.500 5.200 V9.400 M7.500 10.600 V11.800"/></svg>
<div class="t sb" style="left:1137px;top:1014px">0</div>
<div class="t sb" style="left:1329px;top:1014px;letter-spacing:-0.310px">Ln 17, Col 7</div>
<div class="t sb" style="left:1406px;top:1014px;letter-spacing:-0.431px">Spaces: 4</div>
<div class="t sb" style="left:1472px;top:1014px;letter-spacing:-0.500px">UTF-8</div>
<div class="t sb" style="left:1519px;top:1014px;letter-spacing:-1.211px">CRLF</div>
<svg class="abs" style="left:1562px;top:1014px" width="16" height="16" viewBox="0 0 16 16" fill="none" stroke="#ccc" stroke-width="1.500"><path d="M4.600 1.200 C2.600 1.200 3.400 3.400 3.200 5 C3.100 6 2.400 6.600 1.400 6.800 C2.400 7 3.100 7.600 3.200 8.600 C3.400 10.200 2.600 12.400 4.600 12.400"/><path d="M8.400 1.200 C10.400 1.200 9.600 3.400 9.800 5 C9.900 6 10.600 6.600 11.600 6.800 C10.800 7 10.200 7.400 10 8"/><circle cx="11.400" cy="12.200" r="2.900" fill="#ccc" stroke="none"/><path d="M10.200 11 L12.600 13.400 M12.600 11 L10.200 13.400" stroke="#181818" stroke-width="0.900"/></svg>
<div class="t sb" style="left:1584px;top:1014px;letter-spacing:-0.543px">HTML</div>
<svg class="abs" style="left:1630px;top:1014px" width="17" height="14" viewBox="0 0 17 14" fill="none" stroke="#ccc" stroke-linejoin="round"><path d="M8.500 3 C7.600 0.800 3.400 0.600 2.600 3 C2.200 4.200 2.300 5.400 2.600 6.200 C1.400 7 0.800 7.800 0.800 9 V10.400 C2.600 12.400 5.600 13.300 8.500 13.300 C11.400 13.300 14.400 12.400 16.200 10.400 V9 C16.200 7.800 15.600 7 14.400 6.200 C14.700 5.400 14.800 4.200 14.400 3 C13.600 0.600 9.400 0.800 8.500 3 Z" stroke-width="1.500"/><ellipse cx="5.700" cy="4.300" rx="1.900" ry="2.100" stroke-width="1.200"/><ellipse cx="11.300" cy="4.300" rx="1.900" ry="2.100" stroke-width="1.200"/><path d="M6.900 8.700 V10.700 M10.100 8.700 V10.700" stroke-width="1.600"/></svg>
<div class="t sb" style="left:1650px;top:1014px;letter-spacing:-0.225px">Finish Setup</div>
<svg class="abs" style="left:1731px;top:1013px" width="14" height="14" viewBox="0 0 14 14" fill="none" stroke="#ccc" stroke-width="1.100"><circle cx="7" cy="7" r="6.200"/><path d="M2.800 11.200 L11.200 2.800"/></svg>
<div class="t sb" style="left:1749px;top:1014px;letter-spacing:-0.202px">Port : 5500</div>
<svg class="abs" style="left:1822px;top:1015px" width="15" height="10" viewBox="0 0 15 10" fill="none" stroke="#ccc" stroke-width="1.100"><path d="M0.600 5.400 L4 8.800 L11 1 M6.200 7.200 L7.800 8.800 L14.600 1"/></svg>
<div class="t sb" style="left:1841px;top:1014px;letter-spacing:-0.086px">Prettier</div>
<svg class="abs" style="left:1897px;top:1012px" width="14" height="16" viewBox="0 0 14 16"><path d="M6.500 2.400 C3.800 2.400 2.600 4.400 2.600 6.600 V9.600 L1 12 H12 L10.400 9.600 V8" fill="none" stroke="#ccc" stroke-width="1.100" stroke-linejoin="round"/><path d="M5 13 A1.600 1.600 0 0 0 8 13" fill="none" stroke="#ccc" stroke-width="1.100"/><circle cx="10.600" cy="3.600" r="2.600" fill="#ccc"/></svg>

</div>
</body>
</html>
